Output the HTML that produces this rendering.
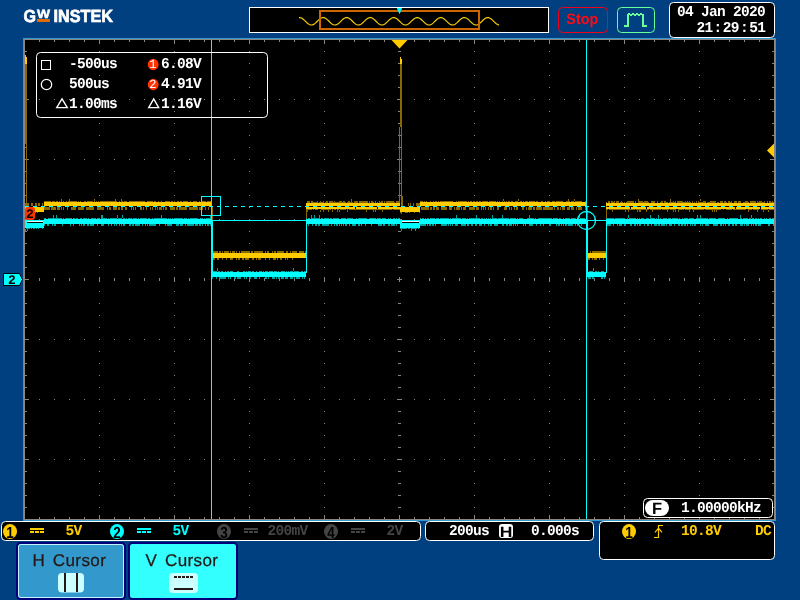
<!DOCTYPE html>
<html lang="en">
<head>
<meta charset="utf-8">
<title>GW Instek oscilloscope - cursor measurement</title>
<style>
html,body{margin:0;padding:0;background:#004080;}
body{width:800px;height:600px;overflow:hidden;position:relative;}
svg{position:absolute;left:0;top:0;display:block;will-change:transform;}
text{white-space:pre;}
</style>
</head>
<body>
<svg width="800" height="600" viewBox="0 0 800 600" shape-rendering="crispEdges" text-rendering="geometricPrecision">
<rect x="0" y="0" width="800" height="600" fill="#004080"/>
<rect x="23" y="38" width="753" height="483" fill="#3399cc" />
<rect x="24" y="39" width="751" height="481" fill="#8c8580" />
<rect x="25" y="40" width="749" height="479" fill="#000" />
<path d="M99 51h1v1h-1zM99 63h1v1h-1zM99 75h1v1h-1zM99 87h1v1h-1zM99 99h1v1h-1zM99 111h1v1h-1zM99 123h1v1h-1zM99 135h1v1h-1zM99 147h1v1h-1zM99 159h1v1h-1zM99 171h1v1h-1zM99 183h1v1h-1zM99 195h1v1h-1zM99 207h1v1h-1zM99 219h1v1h-1zM99 231h1v1h-1zM99 243h1v1h-1zM99 255h1v1h-1zM99 267h1v1h-1zM99 279h1v1h-1zM99 291h1v1h-1zM99 303h1v1h-1zM99 315h1v1h-1zM99 327h1v1h-1zM99 339h1v1h-1zM99 351h1v1h-1zM99 363h1v1h-1zM99 375h1v1h-1zM99 387h1v1h-1zM99 399h1v1h-1zM99 411h1v1h-1zM99 423h1v1h-1zM99 435h1v1h-1zM99 447h1v1h-1zM99 459h1v1h-1zM99 471h1v1h-1zM99 483h1v1h-1zM99 495h1v1h-1zM99 507h1v1h-1zM174 51h1v1h-1zM174 63h1v1h-1zM174 75h1v1h-1zM174 87h1v1h-1zM174 99h1v1h-1zM174 111h1v1h-1zM174 123h1v1h-1zM174 135h1v1h-1zM174 147h1v1h-1zM174 159h1v1h-1zM174 171h1v1h-1zM174 183h1v1h-1zM174 195h1v1h-1zM174 207h1v1h-1zM174 219h1v1h-1zM174 231h1v1h-1zM174 243h1v1h-1zM174 255h1v1h-1zM174 267h1v1h-1zM174 279h1v1h-1zM174 291h1v1h-1zM174 303h1v1h-1zM174 315h1v1h-1zM174 327h1v1h-1zM174 339h1v1h-1zM174 351h1v1h-1zM174 363h1v1h-1zM174 375h1v1h-1zM174 387h1v1h-1zM174 399h1v1h-1zM174 411h1v1h-1zM174 423h1v1h-1zM174 435h1v1h-1zM174 447h1v1h-1zM174 459h1v1h-1zM174 471h1v1h-1zM174 483h1v1h-1zM174 495h1v1h-1zM174 507h1v1h-1zM249 51h1v1h-1zM249 63h1v1h-1zM249 75h1v1h-1zM249 87h1v1h-1zM249 99h1v1h-1zM249 111h1v1h-1zM249 123h1v1h-1zM249 135h1v1h-1zM249 147h1v1h-1zM249 159h1v1h-1zM249 171h1v1h-1zM249 183h1v1h-1zM249 195h1v1h-1zM249 207h1v1h-1zM249 219h1v1h-1zM249 231h1v1h-1zM249 243h1v1h-1zM249 255h1v1h-1zM249 267h1v1h-1zM249 279h1v1h-1zM249 291h1v1h-1zM249 303h1v1h-1zM249 315h1v1h-1zM249 327h1v1h-1zM249 339h1v1h-1zM249 351h1v1h-1zM249 363h1v1h-1zM249 375h1v1h-1zM249 387h1v1h-1zM249 399h1v1h-1zM249 411h1v1h-1zM249 423h1v1h-1zM249 435h1v1h-1zM249 447h1v1h-1zM249 459h1v1h-1zM249 471h1v1h-1zM249 483h1v1h-1zM249 495h1v1h-1zM249 507h1v1h-1zM324 51h1v1h-1zM324 63h1v1h-1zM324 75h1v1h-1zM324 87h1v1h-1zM324 99h1v1h-1zM324 111h1v1h-1zM324 123h1v1h-1zM324 135h1v1h-1zM324 147h1v1h-1zM324 159h1v1h-1zM324 171h1v1h-1zM324 183h1v1h-1zM324 195h1v1h-1zM324 207h1v1h-1zM324 219h1v1h-1zM324 231h1v1h-1zM324 243h1v1h-1zM324 255h1v1h-1zM324 267h1v1h-1zM324 279h1v1h-1zM324 291h1v1h-1zM324 303h1v1h-1zM324 315h1v1h-1zM324 327h1v1h-1zM324 339h1v1h-1zM324 351h1v1h-1zM324 363h1v1h-1zM324 375h1v1h-1zM324 387h1v1h-1zM324 399h1v1h-1zM324 411h1v1h-1zM324 423h1v1h-1zM324 435h1v1h-1zM324 447h1v1h-1zM324 459h1v1h-1zM324 471h1v1h-1zM324 483h1v1h-1zM324 495h1v1h-1zM324 507h1v1h-1zM474 51h1v1h-1zM474 63h1v1h-1zM474 75h1v1h-1zM474 87h1v1h-1zM474 99h1v1h-1zM474 111h1v1h-1zM474 123h1v1h-1zM474 135h1v1h-1zM474 147h1v1h-1zM474 159h1v1h-1zM474 171h1v1h-1zM474 183h1v1h-1zM474 195h1v1h-1zM474 207h1v1h-1zM474 219h1v1h-1zM474 231h1v1h-1zM474 243h1v1h-1zM474 255h1v1h-1zM474 267h1v1h-1zM474 279h1v1h-1zM474 291h1v1h-1zM474 303h1v1h-1zM474 315h1v1h-1zM474 327h1v1h-1zM474 339h1v1h-1zM474 351h1v1h-1zM474 363h1v1h-1zM474 375h1v1h-1zM474 387h1v1h-1zM474 399h1v1h-1zM474 411h1v1h-1zM474 423h1v1h-1zM474 435h1v1h-1zM474 447h1v1h-1zM474 459h1v1h-1zM474 471h1v1h-1zM474 483h1v1h-1zM474 495h1v1h-1zM474 507h1v1h-1zM549 51h1v1h-1zM549 63h1v1h-1zM549 75h1v1h-1zM549 87h1v1h-1zM549 99h1v1h-1zM549 111h1v1h-1zM549 123h1v1h-1zM549 135h1v1h-1zM549 147h1v1h-1zM549 159h1v1h-1zM549 171h1v1h-1zM549 183h1v1h-1zM549 195h1v1h-1zM549 207h1v1h-1zM549 219h1v1h-1zM549 231h1v1h-1zM549 243h1v1h-1zM549 255h1v1h-1zM549 267h1v1h-1zM549 279h1v1h-1zM549 291h1v1h-1zM549 303h1v1h-1zM549 315h1v1h-1zM549 327h1v1h-1zM549 339h1v1h-1zM549 351h1v1h-1zM549 363h1v1h-1zM549 375h1v1h-1zM549 387h1v1h-1zM549 399h1v1h-1zM549 411h1v1h-1zM549 423h1v1h-1zM549 435h1v1h-1zM549 447h1v1h-1zM549 459h1v1h-1zM549 471h1v1h-1zM549 483h1v1h-1zM549 495h1v1h-1zM549 507h1v1h-1zM624 51h1v1h-1zM624 63h1v1h-1zM624 75h1v1h-1zM624 87h1v1h-1zM624 99h1v1h-1zM624 111h1v1h-1zM624 123h1v1h-1zM624 135h1v1h-1zM624 147h1v1h-1zM624 159h1v1h-1zM624 171h1v1h-1zM624 183h1v1h-1zM624 195h1v1h-1zM624 207h1v1h-1zM624 219h1v1h-1zM624 231h1v1h-1zM624 243h1v1h-1zM624 255h1v1h-1zM624 267h1v1h-1zM624 279h1v1h-1zM624 291h1v1h-1zM624 303h1v1h-1zM624 315h1v1h-1zM624 327h1v1h-1zM624 339h1v1h-1zM624 351h1v1h-1zM624 363h1v1h-1zM624 375h1v1h-1zM624 387h1v1h-1zM624 399h1v1h-1zM624 411h1v1h-1zM624 423h1v1h-1zM624 435h1v1h-1zM624 447h1v1h-1zM624 459h1v1h-1zM624 471h1v1h-1zM624 483h1v1h-1zM624 495h1v1h-1zM624 507h1v1h-1zM699 51h1v1h-1zM699 63h1v1h-1zM699 75h1v1h-1zM699 87h1v1h-1zM699 99h1v1h-1zM699 111h1v1h-1zM699 123h1v1h-1zM699 135h1v1h-1zM699 147h1v1h-1zM699 159h1v1h-1zM699 171h1v1h-1zM699 183h1v1h-1zM699 195h1v1h-1zM699 207h1v1h-1zM699 219h1v1h-1zM699 231h1v1h-1zM699 243h1v1h-1zM699 255h1v1h-1zM699 267h1v1h-1zM699 279h1v1h-1zM699 291h1v1h-1zM699 303h1v1h-1zM699 315h1v1h-1zM699 327h1v1h-1zM699 339h1v1h-1zM699 351h1v1h-1zM699 363h1v1h-1zM699 375h1v1h-1zM699 387h1v1h-1zM699 399h1v1h-1zM699 411h1v1h-1zM699 423h1v1h-1zM699 435h1v1h-1zM699 447h1v1h-1zM699 459h1v1h-1zM699 471h1v1h-1zM699 483h1v1h-1zM699 495h1v1h-1zM699 507h1v1h-1zM39 99h1v1h-1zM54 99h1v1h-1zM69 99h1v1h-1zM84 99h1v1h-1zM99 99h1v1h-1zM114 99h1v1h-1zM129 99h1v1h-1zM144 99h1v1h-1zM159 99h1v1h-1zM174 99h1v1h-1zM189 99h1v1h-1zM204 99h1v1h-1zM219 99h1v1h-1zM234 99h1v1h-1zM249 99h1v1h-1zM264 99h1v1h-1zM279 99h1v1h-1zM294 99h1v1h-1zM309 99h1v1h-1zM324 99h1v1h-1zM339 99h1v1h-1zM354 99h1v1h-1zM369 99h1v1h-1zM384 99h1v1h-1zM399 99h1v1h-1zM414 99h1v1h-1zM429 99h1v1h-1zM444 99h1v1h-1zM459 99h1v1h-1zM474 99h1v1h-1zM489 99h1v1h-1zM504 99h1v1h-1zM519 99h1v1h-1zM534 99h1v1h-1zM549 99h1v1h-1zM564 99h1v1h-1zM579 99h1v1h-1zM594 99h1v1h-1zM609 99h1v1h-1zM624 99h1v1h-1zM639 99h1v1h-1zM654 99h1v1h-1zM669 99h1v1h-1zM684 99h1v1h-1zM699 99h1v1h-1zM714 99h1v1h-1zM729 99h1v1h-1zM744 99h1v1h-1zM759 99h1v1h-1zM39 159h1v1h-1zM54 159h1v1h-1zM69 159h1v1h-1zM84 159h1v1h-1zM99 159h1v1h-1zM114 159h1v1h-1zM129 159h1v1h-1zM144 159h1v1h-1zM159 159h1v1h-1zM174 159h1v1h-1zM189 159h1v1h-1zM204 159h1v1h-1zM219 159h1v1h-1zM234 159h1v1h-1zM249 159h1v1h-1zM264 159h1v1h-1zM279 159h1v1h-1zM294 159h1v1h-1zM309 159h1v1h-1zM324 159h1v1h-1zM339 159h1v1h-1zM354 159h1v1h-1zM369 159h1v1h-1zM384 159h1v1h-1zM399 159h1v1h-1zM414 159h1v1h-1zM429 159h1v1h-1zM444 159h1v1h-1zM459 159h1v1h-1zM474 159h1v1h-1zM489 159h1v1h-1zM504 159h1v1h-1zM519 159h1v1h-1zM534 159h1v1h-1zM549 159h1v1h-1zM564 159h1v1h-1zM579 159h1v1h-1zM594 159h1v1h-1zM609 159h1v1h-1zM624 159h1v1h-1zM639 159h1v1h-1zM654 159h1v1h-1zM669 159h1v1h-1zM684 159h1v1h-1zM699 159h1v1h-1zM714 159h1v1h-1zM729 159h1v1h-1zM744 159h1v1h-1zM759 159h1v1h-1zM39 219h1v1h-1zM54 219h1v1h-1zM69 219h1v1h-1zM84 219h1v1h-1zM99 219h1v1h-1zM114 219h1v1h-1zM129 219h1v1h-1zM144 219h1v1h-1zM159 219h1v1h-1zM174 219h1v1h-1zM189 219h1v1h-1zM204 219h1v1h-1zM219 219h1v1h-1zM234 219h1v1h-1zM249 219h1v1h-1zM264 219h1v1h-1zM279 219h1v1h-1zM294 219h1v1h-1zM309 219h1v1h-1zM324 219h1v1h-1zM339 219h1v1h-1zM354 219h1v1h-1zM369 219h1v1h-1zM384 219h1v1h-1zM399 219h1v1h-1zM414 219h1v1h-1zM429 219h1v1h-1zM444 219h1v1h-1zM459 219h1v1h-1zM474 219h1v1h-1zM489 219h1v1h-1zM504 219h1v1h-1zM519 219h1v1h-1zM534 219h1v1h-1zM549 219h1v1h-1zM564 219h1v1h-1zM579 219h1v1h-1zM594 219h1v1h-1zM609 219h1v1h-1zM624 219h1v1h-1zM639 219h1v1h-1zM654 219h1v1h-1zM669 219h1v1h-1zM684 219h1v1h-1zM699 219h1v1h-1zM714 219h1v1h-1zM729 219h1v1h-1zM744 219h1v1h-1zM759 219h1v1h-1zM39 339h1v1h-1zM54 339h1v1h-1zM69 339h1v1h-1zM84 339h1v1h-1zM99 339h1v1h-1zM114 339h1v1h-1zM129 339h1v1h-1zM144 339h1v1h-1zM159 339h1v1h-1zM174 339h1v1h-1zM189 339h1v1h-1zM204 339h1v1h-1zM219 339h1v1h-1zM234 339h1v1h-1zM249 339h1v1h-1zM264 339h1v1h-1zM279 339h1v1h-1zM294 339h1v1h-1zM309 339h1v1h-1zM324 339h1v1h-1zM339 339h1v1h-1zM354 339h1v1h-1zM369 339h1v1h-1zM384 339h1v1h-1zM399 339h1v1h-1zM414 339h1v1h-1zM429 339h1v1h-1zM444 339h1v1h-1zM459 339h1v1h-1zM474 339h1v1h-1zM489 339h1v1h-1zM504 339h1v1h-1zM519 339h1v1h-1zM534 339h1v1h-1zM549 339h1v1h-1zM564 339h1v1h-1zM579 339h1v1h-1zM594 339h1v1h-1zM609 339h1v1h-1zM624 339h1v1h-1zM639 339h1v1h-1zM654 339h1v1h-1zM669 339h1v1h-1zM684 339h1v1h-1zM699 339h1v1h-1zM714 339h1v1h-1zM729 339h1v1h-1zM744 339h1v1h-1zM759 339h1v1h-1zM39 399h1v1h-1zM54 399h1v1h-1zM69 399h1v1h-1zM84 399h1v1h-1zM99 399h1v1h-1zM114 399h1v1h-1zM129 399h1v1h-1zM144 399h1v1h-1zM159 399h1v1h-1zM174 399h1v1h-1zM189 399h1v1h-1zM204 399h1v1h-1zM219 399h1v1h-1zM234 399h1v1h-1zM249 399h1v1h-1zM264 399h1v1h-1zM279 399h1v1h-1zM294 399h1v1h-1zM309 399h1v1h-1zM324 399h1v1h-1zM339 399h1v1h-1zM354 399h1v1h-1zM369 399h1v1h-1zM384 399h1v1h-1zM399 399h1v1h-1zM414 399h1v1h-1zM429 399h1v1h-1zM444 399h1v1h-1zM459 399h1v1h-1zM474 399h1v1h-1zM489 399h1v1h-1zM504 399h1v1h-1zM519 399h1v1h-1zM534 399h1v1h-1zM549 399h1v1h-1zM564 399h1v1h-1zM579 399h1v1h-1zM594 399h1v1h-1zM609 399h1v1h-1zM624 399h1v1h-1zM639 399h1v1h-1zM654 399h1v1h-1zM669 399h1v1h-1zM684 399h1v1h-1zM699 399h1v1h-1zM714 399h1v1h-1zM729 399h1v1h-1zM744 399h1v1h-1zM759 399h1v1h-1zM39 459h1v1h-1zM54 459h1v1h-1zM69 459h1v1h-1zM84 459h1v1h-1zM99 459h1v1h-1zM114 459h1v1h-1zM129 459h1v1h-1zM144 459h1v1h-1zM159 459h1v1h-1zM174 459h1v1h-1zM189 459h1v1h-1zM204 459h1v1h-1zM219 459h1v1h-1zM234 459h1v1h-1zM249 459h1v1h-1zM264 459h1v1h-1zM279 459h1v1h-1zM294 459h1v1h-1zM309 459h1v1h-1zM324 459h1v1h-1zM339 459h1v1h-1zM354 459h1v1h-1zM369 459h1v1h-1zM384 459h1v1h-1zM399 459h1v1h-1zM414 459h1v1h-1zM429 459h1v1h-1zM444 459h1v1h-1zM459 459h1v1h-1zM474 459h1v1h-1zM489 459h1v1h-1zM504 459h1v1h-1zM519 459h1v1h-1zM534 459h1v1h-1zM549 459h1v1h-1zM564 459h1v1h-1zM579 459h1v1h-1zM594 459h1v1h-1zM609 459h1v1h-1zM624 459h1v1h-1zM639 459h1v1h-1zM654 459h1v1h-1zM669 459h1v1h-1zM684 459h1v1h-1zM699 459h1v1h-1zM714 459h1v1h-1zM729 459h1v1h-1zM744 459h1v1h-1zM759 459h1v1h-1z" fill="#848684"/>
<path d="M398 51h3v1h-3zM398 63h3v1h-3zM398 75h3v1h-3zM398 87h3v1h-3zM397 99h5v1h-5zM398 111h3v1h-3zM398 123h3v1h-3zM398 135h3v1h-3zM398 147h3v1h-3zM397 159h5v1h-5zM398 171h3v1h-3zM398 183h3v1h-3zM398 195h3v1h-3zM398 207h3v1h-3zM397 219h5v1h-5zM398 231h3v1h-3zM398 243h3v1h-3zM398 255h3v1h-3zM398 267h3v1h-3zM397 279h5v1h-5zM398 291h3v1h-3zM398 303h3v1h-3zM398 315h3v1h-3zM398 327h3v1h-3zM397 339h5v1h-5zM398 351h3v1h-3zM398 363h3v1h-3zM398 375h3v1h-3zM398 387h3v1h-3zM397 399h5v1h-5zM398 411h3v1h-3zM398 423h3v1h-3zM398 435h3v1h-3zM398 447h3v1h-3zM397 459h5v1h-5zM398 471h3v1h-3zM398 483h3v1h-3zM398 495h3v1h-3zM398 507h3v1h-3zM39 278h1v3h-1zM54 278h1v3h-1zM69 278h1v3h-1zM84 278h1v3h-1zM99 277h1v5h-1zM114 278h1v3h-1zM129 278h1v3h-1zM144 278h1v3h-1zM159 278h1v3h-1zM174 277h1v5h-1zM189 278h1v3h-1zM204 278h1v3h-1zM219 278h1v3h-1zM234 278h1v3h-1zM249 277h1v5h-1zM264 278h1v3h-1zM279 278h1v3h-1zM294 278h1v3h-1zM309 278h1v3h-1zM324 277h1v5h-1zM339 278h1v3h-1zM354 278h1v3h-1zM369 278h1v3h-1zM384 278h1v3h-1zM399 277h1v5h-1zM414 278h1v3h-1zM429 278h1v3h-1zM444 278h1v3h-1zM459 278h1v3h-1zM474 277h1v5h-1zM489 278h1v3h-1zM504 278h1v3h-1zM519 278h1v3h-1zM534 278h1v3h-1zM549 277h1v5h-1zM564 278h1v3h-1zM579 278h1v3h-1zM594 278h1v3h-1zM609 278h1v3h-1zM624 277h1v5h-1zM639 278h1v3h-1zM654 278h1v3h-1zM669 278h1v3h-1zM684 278h1v3h-1zM699 277h1v5h-1zM714 278h1v3h-1zM729 278h1v3h-1zM744 278h1v3h-1zM759 278h1v3h-1zM39 40h1v2h-1zM39 517h1v2h-1zM54 40h1v2h-1zM54 517h1v2h-1zM69 40h1v2h-1zM69 517h1v2h-1zM84 40h1v2h-1zM84 517h1v2h-1zM99 40h1v4h-1zM99 515h1v4h-1zM114 40h1v2h-1zM114 517h1v2h-1zM129 40h1v2h-1zM129 517h1v2h-1zM144 40h1v2h-1zM144 517h1v2h-1zM159 40h1v2h-1zM159 517h1v2h-1zM174 40h1v4h-1zM174 515h1v4h-1zM189 40h1v2h-1zM189 517h1v2h-1zM204 40h1v2h-1zM204 517h1v2h-1zM219 40h1v2h-1zM219 517h1v2h-1zM234 40h1v2h-1zM234 517h1v2h-1zM249 40h1v4h-1zM249 515h1v4h-1zM264 40h1v2h-1zM264 517h1v2h-1zM279 40h1v2h-1zM279 517h1v2h-1zM294 40h1v2h-1zM294 517h1v2h-1zM309 40h1v2h-1zM309 517h1v2h-1zM324 40h1v4h-1zM324 515h1v4h-1zM339 40h1v2h-1zM339 517h1v2h-1zM354 40h1v2h-1zM354 517h1v2h-1zM369 40h1v2h-1zM369 517h1v2h-1zM384 40h1v2h-1zM384 517h1v2h-1zM399 40h1v4h-1zM399 515h1v4h-1zM414 40h1v2h-1zM414 517h1v2h-1zM429 40h1v2h-1zM429 517h1v2h-1zM444 40h1v2h-1zM444 517h1v2h-1zM459 40h1v2h-1zM459 517h1v2h-1zM474 40h1v4h-1zM474 515h1v4h-1zM489 40h1v2h-1zM489 517h1v2h-1zM504 40h1v2h-1zM504 517h1v2h-1zM519 40h1v2h-1zM519 517h1v2h-1zM534 40h1v2h-1zM534 517h1v2h-1zM549 40h1v4h-1zM549 515h1v4h-1zM564 40h1v2h-1zM564 517h1v2h-1zM579 40h1v2h-1zM579 517h1v2h-1zM594 40h1v2h-1zM594 517h1v2h-1zM609 40h1v2h-1zM609 517h1v2h-1zM624 40h1v4h-1zM624 515h1v4h-1zM639 40h1v2h-1zM639 517h1v2h-1zM654 40h1v2h-1zM654 517h1v2h-1zM669 40h1v2h-1zM669 517h1v2h-1zM684 40h1v2h-1zM684 517h1v2h-1zM699 40h1v4h-1zM699 515h1v4h-1zM714 40h1v2h-1zM714 517h1v2h-1zM729 40h1v2h-1zM729 517h1v2h-1zM744 40h1v2h-1zM744 517h1v2h-1zM759 40h1v2h-1zM759 517h1v2h-1zM25 51h2v1h-2zM772 51h2v1h-2zM25 63h2v1h-2zM772 63h2v1h-2zM25 75h2v1h-2zM772 75h2v1h-2zM25 87h2v1h-2zM772 87h2v1h-2zM25 99h4v1h-4zM770 99h4v1h-4zM25 111h2v1h-2zM772 111h2v1h-2zM25 123h2v1h-2zM772 123h2v1h-2zM25 135h2v1h-2zM772 135h2v1h-2zM25 147h2v1h-2zM772 147h2v1h-2zM25 159h4v1h-4zM770 159h4v1h-4zM25 171h2v1h-2zM772 171h2v1h-2zM25 183h2v1h-2zM772 183h2v1h-2zM25 195h2v1h-2zM772 195h2v1h-2zM25 207h2v1h-2zM772 207h2v1h-2zM25 219h4v1h-4zM770 219h4v1h-4zM25 231h2v1h-2zM772 231h2v1h-2zM25 243h2v1h-2zM772 243h2v1h-2zM25 255h2v1h-2zM772 255h2v1h-2zM25 267h2v1h-2zM772 267h2v1h-2zM25 279h4v1h-4zM770 279h4v1h-4zM25 291h2v1h-2zM772 291h2v1h-2zM25 303h2v1h-2zM772 303h2v1h-2zM25 315h2v1h-2zM772 315h2v1h-2zM25 327h2v1h-2zM772 327h2v1h-2zM25 339h4v1h-4zM770 339h4v1h-4zM25 351h2v1h-2zM772 351h2v1h-2zM25 363h2v1h-2zM772 363h2v1h-2zM25 375h2v1h-2zM772 375h2v1h-2zM25 387h2v1h-2zM772 387h2v1h-2zM25 399h4v1h-4zM770 399h4v1h-4zM25 411h2v1h-2zM772 411h2v1h-2zM25 423h2v1h-2zM772 423h2v1h-2zM25 435h2v1h-2zM772 435h2v1h-2zM25 447h2v1h-2zM772 447h2v1h-2zM25 459h4v1h-4zM770 459h4v1h-4zM25 471h2v1h-2zM772 471h2v1h-2zM25 483h2v1h-2zM772 483h2v1h-2zM25 495h2v1h-2zM772 495h2v1h-2zM25 507h2v1h-2zM772 507h2v1h-2z" fill="#868686"/>
<path d="M25 203h1v3h-1zM25 212h1v1h-1zM27 203h1v3h-1zM28 203h1v3h-1zM30 212h1v1h-1zM31 203h1v3h-1zM31 212h1v1h-1zM32 203h1v3h-1zM33 212h1v1h-1zM35 203h1v3h-1zM35 212h1v1h-1zM36 203h1v3h-1zM37 212h1v1h-1zM38 203h1v3h-1zM39 203h1v3h-1zM42 203h1v3h-1zM44 201h1v1h-1zM44 207h1v3h-1zM45 201h1v1h-1zM45 207h1v3h-1zM46 201h1v1h-1zM46 207h1v3h-1zM47 201h1v1h-1zM47 207h1v3h-1zM48 201h1v1h-1zM48 207h1v3h-1zM49 201h1v1h-1zM49 207h1v3h-1zM50 201h1v1h-1zM51 207h1v3h-1zM52 201h1v1h-1zM52 207h1v3h-1zM53 201h1v1h-1zM53 207h1v3h-1zM54 201h1v1h-1zM54 207h1v3h-1zM55 207h1v3h-1zM56 201h1v1h-1zM57 201h1v1h-1zM57 207h1v3h-1zM58 207h1v3h-1zM59 201h1v1h-1zM59 207h1v3h-1zM61 201h1v1h-1zM61 199h1v2h-1zM61 207h1v3h-1zM63 201h1v1h-1zM63 207h1v3h-1zM66 201h1v1h-1zM67 207h1v3h-1zM68 201h1v1h-1zM69 201h1v1h-1zM69 199h1v2h-1zM70 201h1v1h-1zM71 201h1v1h-1zM71 207h1v3h-1zM72 201h1v1h-1zM72 207h1v3h-1zM73 201h1v1h-1zM73 207h1v3h-1zM74 201h1v1h-1zM74 207h1v3h-1zM75 201h1v1h-1zM75 207h1v3h-1zM76 201h1v1h-1zM78 201h1v1h-1zM78 207h1v3h-1zM79 207h1v3h-1zM80 201h1v1h-1zM80 207h1v3h-1zM81 207h1v3h-1zM82 207h1v3h-1zM83 207h1v3h-1zM84 201h1v1h-1zM85 201h1v1h-1zM86 207h1v3h-1zM87 201h1v1h-1zM87 207h1v3h-1zM88 201h1v1h-1zM88 207h1v3h-1zM89 201h1v1h-1zM89 207h1v3h-1zM90 201h1v1h-1zM90 207h1v3h-1zM91 201h1v1h-1zM91 207h1v3h-1zM92 201h1v1h-1zM92 207h1v3h-1zM93 207h1v3h-1zM94 201h1v1h-1zM94 199h1v2h-1zM96 201h1v1h-1zM97 207h1v3h-1zM98 201h1v1h-1zM98 207h1v3h-1zM99 207h1v3h-1zM100 201h1v1h-1zM100 207h1v3h-1zM101 201h1v1h-1zM101 207h1v3h-1zM102 201h1v1h-1zM102 207h1v3h-1zM103 201h1v1h-1zM103 207h1v3h-1zM104 201h1v1h-1zM105 201h1v1h-1zM106 201h1v1h-1zM107 201h1v1h-1zM107 207h1v3h-1zM108 201h1v1h-1zM109 201h1v1h-1zM109 207h1v3h-1zM110 201h1v1h-1zM110 207h1v3h-1zM111 201h1v1h-1zM112 201h1v1h-1zM113 201h1v1h-1zM113 207h1v3h-1zM114 201h1v1h-1zM114 207h1v3h-1zM115 201h1v1h-1zM115 199h1v2h-1zM115 207h1v3h-1zM116 201h1v1h-1zM116 207h1v3h-1zM118 207h1v3h-1zM119 201h1v1h-1zM119 207h1v3h-1zM121 201h1v1h-1zM121 199h1v2h-1zM121 207h1v3h-1zM122 201h1v1h-1zM122 207h1v3h-1zM124 201h1v1h-1zM125 201h1v1h-1zM125 207h1v3h-1zM126 201h1v1h-1zM126 207h1v3h-1zM129 201h1v1h-1zM130 201h1v1h-1zM131 201h1v1h-1zM131 207h1v3h-1zM132 201h1v1h-1zM133 201h1v1h-1zM133 207h1v3h-1zM134 201h1v1h-1zM135 201h1v1h-1zM135 207h1v3h-1zM136 201h1v1h-1zM137 201h1v1h-1zM138 201h1v1h-1zM139 201h1v1h-1zM140 201h1v1h-1zM140 207h1v3h-1zM141 201h1v1h-1zM141 207h1v3h-1zM142 201h1v1h-1zM143 201h1v1h-1zM143 207h1v3h-1zM144 201h1v1h-1zM146 207h1v3h-1zM147 201h1v1h-1zM148 201h1v1h-1zM149 201h1v1h-1zM150 201h1v1h-1zM150 207h1v3h-1zM151 201h1v1h-1zM152 201h1v1h-1zM152 207h1v3h-1zM154 201h1v1h-1zM155 201h1v1h-1zM155 207h1v3h-1zM157 207h1v3h-1zM158 201h1v1h-1zM159 207h1v3h-1zM160 207h1v3h-1zM161 201h1v1h-1zM161 207h1v3h-1zM163 207h1v3h-1zM165 201h1v1h-1zM165 207h1v3h-1zM166 201h1v1h-1zM166 207h1v3h-1zM167 201h1v1h-1zM168 201h1v1h-1zM169 201h1v1h-1zM170 207h1v3h-1zM171 201h1v1h-1zM171 207h1v3h-1zM172 201h1v1h-1zM172 207h1v3h-1zM173 207h1v3h-1zM174 201h1v1h-1zM174 207h1v3h-1zM176 207h1v3h-1zM177 201h1v1h-1zM177 207h1v3h-1zM178 201h1v1h-1zM179 207h1v3h-1zM180 201h1v1h-1zM180 207h1v3h-1zM181 201h1v1h-1zM181 207h1v3h-1zM182 207h1v3h-1zM183 201h1v1h-1zM183 207h1v3h-1zM184 201h1v1h-1zM184 207h1v3h-1zM185 201h1v1h-1zM185 207h1v3h-1zM186 201h1v1h-1zM186 207h1v3h-1zM187 201h1v1h-1zM189 207h1v3h-1zM190 201h1v1h-1zM190 207h1v3h-1zM191 207h1v3h-1zM192 207h1v3h-1zM193 201h1v1h-1zM193 207h1v3h-1zM194 201h1v1h-1zM194 207h1v3h-1zM195 201h1v1h-1zM195 207h1v3h-1zM196 201h1v1h-1zM196 207h1v3h-1zM197 207h1v3h-1zM199 201h1v1h-1zM199 207h1v3h-1zM200 207h1v3h-1zM202 201h1v1h-1zM202 207h1v3h-1zM203 201h1v1h-1zM204 201h1v1h-1zM205 201h1v1h-1zM205 207h1v3h-1zM207 201h1v1h-1zM208 201h1v1h-1zM208 207h1v3h-1zM209 201h1v1h-1zM210 201h1v1h-1zM211 201h1v1h-1zM211 207h1v3h-1zM212 251h1v2h-1zM213 251h1v2h-1zM213 258h1v2h-1zM214 251h1v2h-1zM214 258h1v2h-1zM215 251h1v2h-1zM216 251h1v2h-1zM217 251h1v2h-1zM217 258h1v2h-1zM218 258h1v2h-1zM219 251h1v2h-1zM220 251h1v2h-1zM222 251h1v2h-1zM222 258h1v2h-1zM224 251h1v2h-1zM225 251h1v2h-1zM226 251h1v2h-1zM226 258h1v2h-1zM227 251h1v2h-1zM228 251h1v2h-1zM230 251h1v2h-1zM230 258h1v2h-1zM231 258h1v2h-1zM232 251h1v2h-1zM232 258h1v2h-1zM233 251h1v2h-1zM234 251h1v2h-1zM236 251h1v2h-1zM236 258h1v2h-1zM238 258h1v2h-1zM239 251h1v2h-1zM239 258h1v2h-1zM241 251h1v2h-1zM242 251h1v2h-1zM242 258h1v2h-1zM243 251h1v2h-1zM243 258h1v2h-1zM244 251h1v2h-1zM245 251h1v2h-1zM245 258h1v2h-1zM246 251h1v2h-1zM246 258h1v2h-1zM247 251h1v2h-1zM247 258h1v2h-1zM248 251h1v2h-1zM248 258h1v2h-1zM249 251h1v2h-1zM251 251h1v2h-1zM252 251h1v2h-1zM252 258h1v2h-1zM253 258h1v2h-1zM254 251h1v2h-1zM255 251h1v2h-1zM256 251h1v2h-1zM256 258h1v2h-1zM257 251h1v2h-1zM258 251h1v2h-1zM258 258h1v2h-1zM259 251h1v2h-1zM259 258h1v2h-1zM260 251h1v2h-1zM260 258h1v2h-1zM261 251h1v2h-1zM262 251h1v2h-1zM265 251h1v2h-1zM265 258h1v2h-1zM267 251h1v2h-1zM268 251h1v2h-1zM269 258h1v2h-1zM272 251h1v2h-1zM273 258h1v2h-1zM274 251h1v2h-1zM274 258h1v2h-1zM275 251h1v2h-1zM275 258h1v2h-1zM277 251h1v2h-1zM277 258h1v2h-1zM278 251h1v2h-1zM279 251h1v2h-1zM280 251h1v2h-1zM280 258h1v2h-1zM281 251h1v2h-1zM281 258h1v2h-1zM282 251h1v2h-1zM283 251h1v2h-1zM285 258h1v2h-1zM286 251h1v2h-1zM287 251h1v2h-1zM287 258h1v2h-1zM290 251h1v2h-1zM292 251h1v2h-1zM292 258h1v2h-1zM293 251h1v2h-1zM294 251h1v2h-1zM295 251h1v2h-1zM296 251h1v2h-1zM299 251h1v2h-1zM300 251h1v2h-1zM301 251h1v2h-1zM302 251h1v2h-1zM303 251h1v2h-1zM305 251h1v2h-1zM306 209h1v1h-1zM307 201h1v2h-1zM307 209h1v1h-1zM307 210h1v2h-1zM308 201h1v2h-1zM308 209h1v1h-1zM309 201h1v2h-1zM309 209h1v1h-1zM310 209h1v1h-1zM311 201h1v2h-1zM311 209h1v1h-1zM312 201h1v2h-1zM313 202h1v1h-1zM313 209h1v1h-1zM314 202h1v1h-1zM315 202h1v1h-1zM315 209h1v1h-1zM316 202h1v1h-1zM316 209h1v1h-1zM317 201h1v2h-1zM317 209h1v1h-1zM319 202h1v1h-1zM320 201h1v2h-1zM320 210h1v2h-1zM321 202h1v1h-1zM321 209h1v1h-1zM322 202h1v1h-1zM322 209h1v1h-1zM323 201h1v2h-1zM323 209h1v1h-1zM323 210h1v2h-1zM324 209h1v1h-1zM325 202h1v1h-1zM325 209h1v1h-1zM326 201h1v2h-1zM326 209h1v1h-1zM327 201h1v2h-1zM327 209h1v1h-1zM328 209h1v1h-1zM328 210h1v2h-1zM329 201h1v2h-1zM329 209h1v1h-1zM330 201h1v2h-1zM330 209h1v1h-1zM331 201h1v2h-1zM332 201h1v2h-1zM332 209h1v1h-1zM332 210h1v2h-1zM333 202h1v1h-1zM334 201h1v2h-1zM334 209h1v1h-1zM335 202h1v1h-1zM335 209h1v1h-1zM336 202h1v1h-1zM337 202h1v1h-1zM337 209h1v1h-1zM337 210h1v2h-1zM338 202h1v1h-1zM338 209h1v1h-1zM339 201h1v2h-1zM339 210h1v2h-1zM340 201h1v2h-1zM340 209h1v1h-1zM341 201h1v2h-1zM341 209h1v1h-1zM342 202h1v1h-1zM342 209h1v1h-1zM343 201h1v2h-1zM343 209h1v1h-1zM344 201h1v2h-1zM344 209h1v1h-1zM345 202h1v1h-1zM345 209h1v1h-1zM347 202h1v1h-1zM347 209h1v1h-1zM347 210h1v2h-1zM348 201h1v2h-1zM349 201h1v2h-1zM349 209h1v1h-1zM350 202h1v1h-1zM350 209h1v1h-1zM351 201h1v2h-1zM351 199h1v2h-1zM351 209h1v1h-1zM352 202h1v1h-1zM352 209h1v1h-1zM353 209h1v1h-1zM354 201h1v2h-1zM354 209h1v1h-1zM355 201h1v2h-1zM355 209h1v1h-1zM356 201h1v2h-1zM356 209h1v1h-1zM357 201h1v2h-1zM357 209h1v1h-1zM358 209h1v1h-1zM359 201h1v2h-1zM359 209h1v1h-1zM360 201h1v2h-1zM360 209h1v1h-1zM361 201h1v2h-1zM361 209h1v1h-1zM362 201h1v2h-1zM362 209h1v1h-1zM363 201h1v2h-1zM363 209h1v1h-1zM364 201h1v2h-1zM364 209h1v1h-1zM365 201h1v2h-1zM365 209h1v1h-1zM366 201h1v2h-1zM366 209h1v1h-1zM366 210h1v2h-1zM367 201h1v2h-1zM367 209h1v1h-1zM368 209h1v1h-1zM369 201h1v2h-1zM369 209h1v1h-1zM370 209h1v1h-1zM371 201h1v2h-1zM371 209h1v1h-1zM372 201h1v2h-1zM372 209h1v1h-1zM373 202h1v1h-1zM373 209h1v1h-1zM373 210h1v2h-1zM374 209h1v1h-1zM375 201h1v2h-1zM375 209h1v1h-1zM375 210h1v2h-1zM376 209h1v1h-1zM377 202h1v1h-1zM377 209h1v1h-1zM378 209h1v1h-1zM379 201h1v2h-1zM379 209h1v1h-1zM380 202h1v1h-1zM380 209h1v1h-1zM381 201h1v2h-1zM381 209h1v1h-1zM382 201h1v2h-1zM382 209h1v1h-1zM382 210h1v2h-1zM383 209h1v1h-1zM384 201h1v2h-1zM384 209h1v1h-1zM385 209h1v1h-1zM386 201h1v2h-1zM386 209h1v1h-1zM387 201h1v2h-1zM387 209h1v1h-1zM388 201h1v2h-1zM388 209h1v1h-1zM389 201h1v2h-1zM389 209h1v1h-1zM390 201h1v2h-1zM390 209h1v1h-1zM391 201h1v2h-1zM391 209h1v1h-1zM392 201h1v2h-1zM393 201h1v2h-1zM393 209h1v1h-1zM394 202h1v1h-1zM394 209h1v1h-1zM395 209h1v1h-1zM396 201h1v2h-1zM396 209h1v1h-1zM397 201h1v2h-1zM397 209h1v1h-1zM398 201h1v2h-1zM398 209h1v1h-1zM399 202h1v1h-1zM399 209h1v1h-1zM400 212h1v1h-1zM401 203h1v3h-1zM402 203h1v3h-1zM405 212h1v1h-1zM406 212h1v1h-1zM407 212h1v1h-1zM408 203h1v3h-1zM409 212h1v1h-1zM410 203h1v3h-1zM413 203h1v3h-1zM414 212h1v1h-1zM416 203h1v3h-1zM417 203h1v3h-1zM418 203h1v3h-1zM419 203h1v3h-1zM419 212h1v1h-1zM420 201h1v1h-1zM421 201h1v1h-1zM421 207h1v3h-1zM422 201h1v1h-1zM422 207h1v3h-1zM423 207h1v3h-1zM424 201h1v1h-1zM424 207h1v3h-1zM425 207h1v3h-1zM426 201h1v1h-1zM426 207h1v3h-1zM427 207h1v3h-1zM428 207h1v3h-1zM430 201h1v1h-1zM430 207h1v3h-1zM431 207h1v3h-1zM433 201h1v1h-1zM433 207h1v3h-1zM434 207h1v3h-1zM435 201h1v1h-1zM436 201h1v1h-1zM436 207h1v3h-1zM437 207h1v3h-1zM438 201h1v1h-1zM438 207h1v3h-1zM440 201h1v1h-1zM441 201h1v1h-1zM441 207h1v3h-1zM442 201h1v1h-1zM442 207h1v3h-1zM443 201h1v1h-1zM443 207h1v3h-1zM444 201h1v1h-1zM444 207h1v3h-1zM445 201h1v1h-1zM445 207h1v3h-1zM446 201h1v1h-1zM446 207h1v3h-1zM447 201h1v1h-1zM448 201h1v1h-1zM449 201h1v1h-1zM449 207h1v3h-1zM450 201h1v1h-1zM450 207h1v3h-1zM451 201h1v1h-1zM451 207h1v3h-1zM452 201h1v1h-1zM454 207h1v3h-1zM456 201h1v1h-1zM456 207h1v3h-1zM457 207h1v3h-1zM458 201h1v1h-1zM458 207h1v3h-1zM459 201h1v1h-1zM459 207h1v3h-1zM460 201h1v1h-1zM461 201h1v1h-1zM461 207h1v3h-1zM462 201h1v1h-1zM463 201h1v1h-1zM463 207h1v3h-1zM464 201h1v1h-1zM464 207h1v3h-1zM465 201h1v1h-1zM465 207h1v3h-1zM466 201h1v1h-1zM468 201h1v1h-1zM469 207h1v3h-1zM470 201h1v1h-1zM470 207h1v3h-1zM471 201h1v1h-1zM471 207h1v3h-1zM472 207h1v3h-1zM473 201h1v1h-1zM473 207h1v3h-1zM474 201h1v1h-1zM474 207h1v3h-1zM476 201h1v1h-1zM476 207h1v3h-1zM477 201h1v1h-1zM477 207h1v3h-1zM478 207h1v3h-1zM479 201h1v1h-1zM480 201h1v1h-1zM481 207h1v3h-1zM482 201h1v1h-1zM483 201h1v1h-1zM483 207h1v3h-1zM484 201h1v1h-1zM485 201h1v1h-1zM485 207h1v3h-1zM486 201h1v1h-1zM487 201h1v1h-1zM488 207h1v3h-1zM489 201h1v1h-1zM490 201h1v1h-1zM490 207h1v3h-1zM491 201h1v1h-1zM491 207h1v3h-1zM492 201h1v1h-1zM493 201h1v1h-1zM493 207h1v3h-1zM494 201h1v1h-1zM495 201h1v1h-1zM497 201h1v1h-1zM497 207h1v3h-1zM498 207h1v3h-1zM499 201h1v1h-1zM502 201h1v1h-1zM503 199h1v2h-1zM504 201h1v1h-1zM504 207h1v3h-1zM505 207h1v3h-1zM506 201h1v1h-1zM506 207h1v3h-1zM508 201h1v1h-1zM509 201h1v1h-1zM509 207h1v3h-1zM511 201h1v1h-1zM511 207h1v3h-1zM512 201h1v1h-1zM514 207h1v3h-1zM515 201h1v1h-1zM516 201h1v1h-1zM516 207h1v3h-1zM517 201h1v1h-1zM517 207h1v3h-1zM518 199h1v2h-1zM520 201h1v1h-1zM521 201h1v1h-1zM522 207h1v3h-1zM523 201h1v1h-1zM523 207h1v3h-1zM525 201h1v1h-1zM526 201h1v1h-1zM526 207h1v3h-1zM527 201h1v1h-1zM528 207h1v3h-1zM529 201h1v1h-1zM529 207h1v3h-1zM530 201h1v1h-1zM530 207h1v3h-1zM531 201h1v1h-1zM531 207h1v3h-1zM532 201h1v1h-1zM533 201h1v1h-1zM533 207h1v3h-1zM534 201h1v1h-1zM534 207h1v3h-1zM536 201h1v1h-1zM536 207h1v3h-1zM537 201h1v1h-1zM537 207h1v3h-1zM538 207h1v3h-1zM539 207h1v3h-1zM540 207h1v3h-1zM541 201h1v1h-1zM541 207h1v3h-1zM542 201h1v1h-1zM543 207h1v3h-1zM544 207h1v3h-1zM545 201h1v1h-1zM545 207h1v3h-1zM546 207h1v3h-1zM547 201h1v1h-1zM547 207h1v3h-1zM548 201h1v1h-1zM548 207h1v3h-1zM549 201h1v1h-1zM549 207h1v3h-1zM550 207h1v3h-1zM551 207h1v3h-1zM552 201h1v1h-1zM552 207h1v3h-1zM553 201h1v1h-1zM554 201h1v1h-1zM554 207h1v3h-1zM556 201h1v1h-1zM557 201h1v1h-1zM557 207h1v3h-1zM558 201h1v1h-1zM558 207h1v3h-1zM559 201h1v1h-1zM560 201h1v1h-1zM560 207h1v3h-1zM561 201h1v1h-1zM562 201h1v1h-1zM562 207h1v3h-1zM563 207h1v3h-1zM564 207h1v3h-1zM566 201h1v1h-1zM567 201h1v1h-1zM567 207h1v3h-1zM568 201h1v1h-1zM568 199h1v2h-1zM568 207h1v3h-1zM569 201h1v1h-1zM569 207h1v3h-1zM571 201h1v1h-1zM571 207h1v3h-1zM572 201h1v1h-1zM572 207h1v3h-1zM573 201h1v1h-1zM573 207h1v3h-1zM574 199h1v2h-1zM575 201h1v1h-1zM576 201h1v1h-1zM576 207h1v3h-1zM577 201h1v1h-1zM578 201h1v1h-1zM578 207h1v3h-1zM579 201h1v1h-1zM579 207h1v3h-1zM580 201h1v1h-1zM580 207h1v3h-1zM581 201h1v1h-1zM581 207h1v3h-1zM585 201h1v1h-1zM585 207h1v3h-1zM588 258h1v2h-1zM589 258h1v2h-1zM590 251h1v2h-1zM592 251h1v2h-1zM592 258h1v2h-1zM593 251h1v2h-1zM594 251h1v2h-1zM594 258h1v2h-1zM595 251h1v2h-1zM595 258h1v2h-1zM596 251h1v2h-1zM596 258h1v2h-1zM597 251h1v2h-1zM598 251h1v2h-1zM599 251h1v2h-1zM599 258h1v2h-1zM600 251h1v2h-1zM601 251h1v2h-1zM602 251h1v2h-1zM603 251h1v2h-1zM603 258h1v2h-1zM604 251h1v2h-1zM605 251h1v2h-1zM606 202h1v1h-1zM607 209h1v1h-1zM608 201h1v2h-1zM609 201h1v2h-1zM609 209h1v1h-1zM610 209h1v1h-1zM611 201h1v2h-1zM611 209h1v1h-1zM612 201h1v2h-1zM612 209h1v1h-1zM612 210h1v2h-1zM613 202h1v1h-1zM613 209h1v1h-1zM614 201h1v2h-1zM614 209h1v1h-1zM615 209h1v1h-1zM616 201h1v2h-1zM616 209h1v1h-1zM617 201h1v2h-1zM617 209h1v1h-1zM618 201h1v2h-1zM618 209h1v1h-1zM619 209h1v1h-1zM620 202h1v1h-1zM620 209h1v1h-1zM621 201h1v2h-1zM621 209h1v1h-1zM622 202h1v1h-1zM622 209h1v1h-1zM623 209h1v1h-1zM624 202h1v1h-1zM624 209h1v1h-1zM625 209h1v1h-1zM625 210h1v2h-1zM626 202h1v1h-1zM626 209h1v1h-1zM627 201h1v2h-1zM627 209h1v1h-1zM628 201h1v2h-1zM628 209h1v1h-1zM628 210h1v2h-1zM629 201h1v2h-1zM629 209h1v1h-1zM630 201h1v2h-1zM630 209h1v1h-1zM631 201h1v2h-1zM631 209h1v1h-1zM632 201h1v2h-1zM632 209h1v1h-1zM633 201h1v2h-1zM633 209h1v1h-1zM634 209h1v1h-1zM635 201h1v2h-1zM636 209h1v1h-1zM637 209h1v1h-1zM637 210h1v2h-1zM638 201h1v2h-1zM638 199h1v2h-1zM638 209h1v1h-1zM639 201h1v2h-1zM639 209h1v1h-1zM639 210h1v2h-1zM640 201h1v2h-1zM640 209h1v1h-1zM640 210h1v2h-1zM641 201h1v2h-1zM641 209h1v1h-1zM642 201h1v2h-1zM642 209h1v1h-1zM643 202h1v1h-1zM643 209h1v1h-1zM644 201h1v2h-1zM644 209h1v1h-1zM645 201h1v2h-1zM645 209h1v1h-1zM646 201h1v2h-1zM646 209h1v1h-1zM646 210h1v2h-1zM647 201h1v2h-1zM647 209h1v1h-1zM648 202h1v1h-1zM648 209h1v1h-1zM650 209h1v1h-1zM651 201h1v2h-1zM651 209h1v1h-1zM652 201h1v2h-1zM652 209h1v1h-1zM652 210h1v2h-1zM653 201h1v2h-1zM653 209h1v1h-1zM654 201h1v2h-1zM654 209h1v1h-1zM655 209h1v1h-1zM656 209h1v1h-1zM657 201h1v2h-1zM657 209h1v1h-1zM658 209h1v1h-1zM659 209h1v1h-1zM660 202h1v1h-1zM660 209h1v1h-1zM661 201h1v2h-1zM662 201h1v2h-1zM662 209h1v1h-1zM663 209h1v1h-1zM664 201h1v2h-1zM664 209h1v1h-1zM665 201h1v2h-1zM665 209h1v1h-1zM666 202h1v1h-1zM666 209h1v1h-1zM667 202h1v1h-1zM667 209h1v1h-1zM667 210h1v2h-1zM668 209h1v1h-1zM669 202h1v1h-1zM670 201h1v2h-1zM670 199h1v2h-1zM670 209h1v1h-1zM671 202h1v1h-1zM671 209h1v1h-1zM672 202h1v1h-1zM672 209h1v1h-1zM673 201h1v2h-1zM673 209h1v1h-1zM673 210h1v2h-1zM674 202h1v1h-1zM674 209h1v1h-1zM675 201h1v2h-1zM675 209h1v1h-1zM675 210h1v2h-1zM677 201h1v2h-1zM678 201h1v2h-1zM678 209h1v1h-1zM678 210h1v2h-1zM679 201h1v2h-1zM679 209h1v1h-1zM680 201h1v2h-1zM680 209h1v1h-1zM681 201h1v2h-1zM681 209h1v1h-1zM682 201h1v2h-1zM682 209h1v1h-1zM683 202h1v1h-1zM683 209h1v1h-1zM684 202h1v1h-1zM685 201h1v2h-1zM685 209h1v1h-1zM686 202h1v1h-1zM686 209h1v1h-1zM687 201h1v2h-1zM687 209h1v1h-1zM688 202h1v1h-1zM688 209h1v1h-1zM689 201h1v2h-1zM689 209h1v1h-1zM689 210h1v2h-1zM690 202h1v1h-1zM690 209h1v1h-1zM692 201h1v2h-1zM692 209h1v1h-1zM693 209h1v1h-1zM693 210h1v2h-1zM694 202h1v1h-1zM694 209h1v1h-1zM695 209h1v1h-1zM696 201h1v2h-1zM696 209h1v1h-1zM697 209h1v1h-1zM698 201h1v2h-1zM698 209h1v1h-1zM699 202h1v1h-1zM699 209h1v1h-1zM700 202h1v1h-1zM700 199h1v2h-1zM700 209h1v1h-1zM701 202h1v1h-1zM701 209h1v1h-1zM702 202h1v1h-1zM702 209h1v1h-1zM703 201h1v2h-1zM703 209h1v1h-1zM704 201h1v2h-1zM705 201h1v2h-1zM705 209h1v1h-1zM706 209h1v1h-1zM707 202h1v1h-1zM707 209h1v1h-1zM708 202h1v1h-1zM708 209h1v1h-1zM709 202h1v1h-1zM709 209h1v1h-1zM710 201h1v2h-1zM710 209h1v1h-1zM711 201h1v2h-1zM711 209h1v1h-1zM712 201h1v2h-1zM712 209h1v1h-1zM712 210h1v2h-1zM713 201h1v2h-1zM713 209h1v1h-1zM714 201h1v2h-1zM714 209h1v1h-1zM714 210h1v2h-1zM715 201h1v2h-1zM715 209h1v1h-1zM716 209h1v1h-1zM716 210h1v2h-1zM717 202h1v1h-1zM717 209h1v1h-1zM718 202h1v1h-1zM718 209h1v1h-1zM719 209h1v1h-1zM720 201h1v2h-1zM720 209h1v1h-1zM721 201h1v2h-1zM722 201h1v2h-1zM723 209h1v1h-1zM724 201h1v2h-1zM725 201h1v2h-1zM726 202h1v1h-1zM726 209h1v1h-1zM727 209h1v1h-1zM728 201h1v2h-1zM728 209h1v1h-1zM729 201h1v2h-1zM729 209h1v1h-1zM730 202h1v1h-1zM730 209h1v1h-1zM731 201h1v2h-1zM731 209h1v1h-1zM733 209h1v1h-1zM734 201h1v2h-1zM734 209h1v1h-1zM735 201h1v2h-1zM735 209h1v1h-1zM736 201h1v2h-1zM736 209h1v1h-1zM737 209h1v1h-1zM738 201h1v2h-1zM738 209h1v1h-1zM739 201h1v2h-1zM739 209h1v1h-1zM740 201h1v2h-1zM740 209h1v1h-1zM741 209h1v1h-1zM742 209h1v1h-1zM743 202h1v1h-1zM743 209h1v1h-1zM744 202h1v1h-1zM744 209h1v1h-1zM745 201h1v2h-1zM745 209h1v1h-1zM746 201h1v2h-1zM747 201h1v2h-1zM748 202h1v1h-1zM748 209h1v1h-1zM748 210h1v2h-1zM749 209h1v1h-1zM750 201h1v2h-1zM750 209h1v1h-1zM751 201h1v2h-1zM751 209h1v1h-1zM752 201h1v2h-1zM753 201h1v2h-1zM753 209h1v1h-1zM754 201h1v2h-1zM754 209h1v1h-1zM755 201h1v2h-1zM755 209h1v1h-1zM756 209h1v1h-1zM757 201h1v2h-1zM757 209h1v1h-1zM757 210h1v2h-1zM758 202h1v1h-1zM758 209h1v1h-1zM759 201h1v2h-1zM760 201h1v2h-1zM761 201h1v2h-1zM761 209h1v1h-1zM762 202h1v1h-1zM762 209h1v1h-1zM763 202h1v1h-1zM763 209h1v1h-1zM763 210h1v2h-1zM764 201h1v2h-1zM764 209h1v1h-1zM765 209h1v1h-1zM766 209h1v1h-1zM767 201h1v2h-1zM767 209h1v1h-1zM768 210h1v2h-1zM769 201h1v2h-1zM769 209h1v1h-1zM770 201h1v2h-1zM770 209h1v1h-1zM771 202h1v1h-1zM771 209h1v1h-1zM772 201h1v2h-1zM772 209h1v1h-1zM773 202h1v1h-1zM773 209h1v1h-1zM212 206h1v47h-1zM306 206h1v47h-1zM587 206h1v47h-1zM606 206h1v47h-1zM25 64h2v80h-2zM26 144h1v62h-1zM400 64h2v63h-2zM399 127h1v77h-1zM401 127h1v79h-1zM402 196h1v10h-1zM401 206h1v8h-1z" fill="#8a6a00"/>
<path d="M25 207h1v5h-1zM26 207h1v5h-1zM27 207h1v5h-1zM28 207h1v5h-1zM29 207h1v5h-1zM30 207h1v5h-1zM31 207h1v5h-1zM32 207h1v5h-1zM33 207h1v5h-1zM34 207h1v5h-1zM35 207h1v5h-1zM36 207h1v5h-1zM37 207h1v5h-1zM38 207h1v5h-1zM39 207h1v5h-1zM40 207h1v5h-1zM41 207h1v5h-1zM42 207h1v5h-1zM43 207h1v5h-1zM44 202h1v4h-1zM45 202h1v4h-1zM46 202h1v4h-1zM47 202h1v4h-1zM48 202h1v4h-1zM49 202h1v4h-1zM50 202h1v4h-1zM51 202h1v4h-1zM52 202h1v4h-1zM53 202h1v4h-1zM54 202h1v4h-1zM55 202h1v4h-1zM56 202h1v4h-1zM57 202h1v4h-1zM58 202h1v4h-1zM59 202h1v4h-1zM60 202h1v4h-1zM61 202h1v4h-1zM62 202h1v4h-1zM63 202h1v4h-1zM64 202h1v4h-1zM65 202h1v4h-1zM66 202h1v4h-1zM67 202h1v4h-1zM68 202h1v4h-1zM69 202h1v4h-1zM70 202h1v4h-1zM71 202h1v4h-1zM72 202h1v4h-1zM73 202h1v4h-1zM74 202h1v4h-1zM75 202h1v4h-1zM76 202h1v4h-1zM77 202h1v4h-1zM78 202h1v4h-1zM79 202h1v4h-1zM80 202h1v4h-1zM81 202h1v4h-1zM82 202h1v4h-1zM83 202h1v4h-1zM84 202h1v4h-1zM85 202h1v4h-1zM86 202h1v4h-1zM87 202h1v4h-1zM88 202h1v4h-1zM89 202h1v4h-1zM90 202h1v4h-1zM91 202h1v4h-1zM92 202h1v4h-1zM93 202h1v4h-1zM94 202h1v4h-1zM95 202h1v4h-1zM96 202h1v4h-1zM97 202h1v4h-1zM98 202h1v4h-1zM99 202h1v4h-1zM100 202h1v4h-1zM101 202h1v4h-1zM102 202h1v4h-1zM103 202h1v4h-1zM104 202h1v4h-1zM105 202h1v4h-1zM106 202h1v4h-1zM107 202h1v4h-1zM108 202h1v4h-1zM109 202h1v4h-1zM110 202h1v4h-1zM111 202h1v4h-1zM112 202h1v4h-1zM113 202h1v4h-1zM114 202h1v4h-1zM115 202h1v4h-1zM116 202h1v4h-1zM117 202h1v4h-1zM118 202h1v4h-1zM119 202h1v4h-1zM120 202h1v4h-1zM121 202h1v4h-1zM122 202h1v4h-1zM123 202h1v4h-1zM124 202h1v4h-1zM125 202h1v4h-1zM126 202h1v4h-1zM127 202h1v4h-1zM128 202h1v4h-1zM129 202h1v4h-1zM130 202h1v4h-1zM131 202h1v4h-1zM132 202h1v4h-1zM133 202h1v4h-1zM134 202h1v4h-1zM135 202h1v4h-1zM136 202h1v4h-1zM137 202h1v4h-1zM138 202h1v4h-1zM139 202h1v4h-1zM140 202h1v4h-1zM141 202h1v4h-1zM142 202h1v4h-1zM143 202h1v4h-1zM144 202h1v4h-1zM145 202h1v4h-1zM146 202h1v4h-1zM147 202h1v4h-1zM148 202h1v4h-1zM149 202h1v4h-1zM150 202h1v4h-1zM151 202h1v4h-1zM152 202h1v4h-1zM153 202h1v4h-1zM154 202h1v4h-1zM155 202h1v4h-1zM156 202h1v4h-1zM157 202h1v4h-1zM158 202h1v4h-1zM159 202h1v4h-1zM160 202h1v4h-1zM161 202h1v4h-1zM162 202h1v4h-1zM163 202h1v4h-1zM164 202h1v4h-1zM165 202h1v4h-1zM166 202h1v4h-1zM167 202h1v4h-1zM168 202h1v4h-1zM169 202h1v4h-1zM170 202h1v4h-1zM171 202h1v4h-1zM172 202h1v4h-1zM173 202h1v4h-1zM174 202h1v4h-1zM175 202h1v4h-1zM176 202h1v4h-1zM177 202h1v4h-1zM178 202h1v4h-1zM179 202h1v4h-1zM180 202h1v4h-1zM181 202h1v4h-1zM182 202h1v4h-1zM183 202h1v4h-1zM184 202h1v4h-1zM185 202h1v4h-1zM186 202h1v4h-1zM187 202h1v4h-1zM188 202h1v4h-1zM189 202h1v4h-1zM190 202h1v4h-1zM191 202h1v4h-1zM192 202h1v4h-1zM193 202h1v4h-1zM194 202h1v4h-1zM195 202h1v4h-1zM196 202h1v4h-1zM197 202h1v4h-1zM198 202h1v4h-1zM199 202h1v4h-1zM200 202h1v4h-1zM201 202h1v4h-1zM202 202h1v4h-1zM203 202h1v4h-1zM204 202h1v4h-1zM205 202h1v4h-1zM206 202h1v4h-1zM207 202h1v4h-1zM208 202h1v4h-1zM209 202h1v4h-1zM210 202h1v4h-1zM211 202h1v4h-1zM212 253h1v5h-1zM213 253h1v5h-1zM214 253h1v5h-1zM215 253h1v5h-1zM216 253h1v5h-1zM217 253h1v5h-1zM218 253h1v5h-1zM219 253h1v5h-1zM220 253h1v5h-1zM221 253h1v5h-1zM222 253h1v5h-1zM223 253h1v5h-1zM224 253h1v5h-1zM225 253h1v5h-1zM226 253h1v5h-1zM227 253h1v5h-1zM228 253h1v5h-1zM229 253h1v5h-1zM230 253h1v5h-1zM231 253h1v5h-1zM232 253h1v5h-1zM233 253h1v5h-1zM234 253h1v5h-1zM235 253h1v5h-1zM236 253h1v5h-1zM237 253h1v5h-1zM238 253h1v5h-1zM239 253h1v5h-1zM240 253h1v5h-1zM241 253h1v5h-1zM242 253h1v5h-1zM243 253h1v5h-1zM244 253h1v5h-1zM245 253h1v5h-1zM246 253h1v5h-1zM247 253h1v5h-1zM248 253h1v5h-1zM249 253h1v5h-1zM250 253h1v5h-1zM251 253h1v5h-1zM252 253h1v5h-1zM253 253h1v5h-1zM254 253h1v5h-1zM255 253h1v5h-1zM256 253h1v5h-1zM257 253h1v5h-1zM258 253h1v5h-1zM259 253h1v5h-1zM260 253h1v5h-1zM261 253h1v5h-1zM262 253h1v5h-1zM263 253h1v5h-1zM264 253h1v5h-1zM265 253h1v5h-1zM266 253h1v5h-1zM267 253h1v5h-1zM268 253h1v5h-1zM269 253h1v5h-1zM270 253h1v5h-1zM271 253h1v5h-1zM272 253h1v5h-1zM273 253h1v5h-1zM274 253h1v5h-1zM275 253h1v5h-1zM276 253h1v5h-1zM277 253h1v5h-1zM278 253h1v5h-1zM279 253h1v5h-1zM280 253h1v5h-1zM281 253h1v5h-1zM282 253h1v5h-1zM283 253h1v5h-1zM284 253h1v5h-1zM285 253h1v5h-1zM286 253h1v5h-1zM287 253h1v5h-1zM288 253h1v5h-1zM289 253h1v5h-1zM290 253h1v5h-1zM291 253h1v5h-1zM292 253h1v5h-1zM293 253h1v5h-1zM294 253h1v5h-1zM295 253h1v5h-1zM296 253h1v5h-1zM297 253h1v5h-1zM298 253h1v5h-1zM299 253h1v5h-1zM300 253h1v5h-1zM301 253h1v5h-1zM302 253h1v5h-1zM303 253h1v5h-1zM304 253h1v5h-1zM305 253h1v5h-1zM306 203h1v3h-1zM306 207h1v2h-1zM307 203h1v3h-1zM307 207h1v2h-1zM308 203h1v3h-1zM308 207h1v2h-1zM309 203h1v3h-1zM309 207h1v2h-1zM310 203h1v3h-1zM310 207h1v2h-1zM311 203h1v3h-1zM311 207h1v2h-1zM312 203h1v3h-1zM312 207h1v2h-1zM313 203h1v3h-1zM313 207h1v2h-1zM314 203h1v3h-1zM314 207h1v2h-1zM315 203h1v3h-1zM315 207h1v2h-1zM316 203h1v3h-1zM316 207h1v2h-1zM317 203h1v3h-1zM317 207h1v2h-1zM318 203h1v3h-1zM318 207h1v2h-1zM319 203h1v3h-1zM319 207h1v2h-1zM320 203h1v3h-1zM320 207h1v2h-1zM321 203h1v3h-1zM321 207h1v2h-1zM322 203h1v3h-1zM322 207h1v2h-1zM323 203h1v3h-1zM323 207h1v2h-1zM324 203h1v3h-1zM324 207h1v2h-1zM325 203h1v3h-1zM325 207h1v2h-1zM326 203h1v3h-1zM326 207h1v2h-1zM327 203h1v3h-1zM327 207h1v2h-1zM328 203h1v3h-1zM328 207h1v2h-1zM329 203h1v3h-1zM329 207h1v2h-1zM330 203h1v3h-1zM330 207h1v2h-1zM331 203h1v3h-1zM331 207h1v2h-1zM332 203h1v3h-1zM332 207h1v2h-1zM333 203h1v3h-1zM333 207h1v2h-1zM334 203h1v3h-1zM334 207h1v2h-1zM335 203h1v3h-1zM335 207h1v2h-1zM336 203h1v3h-1zM336 207h1v2h-1zM337 203h1v3h-1zM337 207h1v2h-1zM338 203h1v3h-1zM338 207h1v2h-1zM339 203h1v3h-1zM339 207h1v2h-1zM340 203h1v3h-1zM340 207h1v2h-1zM341 203h1v3h-1zM341 207h1v2h-1zM342 203h1v3h-1zM342 207h1v2h-1zM343 203h1v3h-1zM343 207h1v2h-1zM344 203h1v3h-1zM344 207h1v2h-1zM345 203h1v3h-1zM345 207h1v2h-1zM346 203h1v3h-1zM346 207h1v2h-1zM347 203h1v3h-1zM347 207h1v2h-1zM348 203h1v3h-1zM348 207h1v2h-1zM349 203h1v3h-1zM349 207h1v2h-1zM350 203h1v3h-1zM350 207h1v2h-1zM351 203h1v3h-1zM351 207h1v2h-1zM352 203h1v3h-1zM352 207h1v2h-1zM353 203h1v3h-1zM353 207h1v2h-1zM354 203h1v3h-1zM354 207h1v2h-1zM355 203h1v3h-1zM356 203h1v3h-1zM356 207h1v2h-1zM357 203h1v3h-1zM357 207h1v2h-1zM358 203h1v3h-1zM358 207h1v2h-1zM359 203h1v3h-1zM359 207h1v2h-1zM360 203h1v3h-1zM360 207h1v2h-1zM361 203h1v3h-1zM361 207h1v2h-1zM362 203h1v3h-1zM362 207h1v2h-1zM363 203h1v3h-1zM363 207h1v2h-1zM364 203h1v3h-1zM364 207h1v2h-1zM365 203h1v3h-1zM365 207h1v2h-1zM366 203h1v3h-1zM366 207h1v2h-1zM367 203h1v3h-1zM367 207h1v2h-1zM368 203h1v3h-1zM368 207h1v2h-1zM369 203h1v3h-1zM369 207h1v2h-1zM370 203h1v3h-1zM370 207h1v2h-1zM371 203h1v3h-1zM371 207h1v2h-1zM372 203h1v3h-1zM372 207h1v2h-1zM373 203h1v3h-1zM373 207h1v2h-1zM374 203h1v3h-1zM374 207h1v2h-1zM375 203h1v3h-1zM375 207h1v2h-1zM376 203h1v3h-1zM376 207h1v2h-1zM377 203h1v3h-1zM378 203h1v3h-1zM378 207h1v2h-1zM379 203h1v3h-1zM379 207h1v2h-1zM380 203h1v3h-1zM380 207h1v2h-1zM381 203h1v3h-1zM381 207h1v2h-1zM382 203h1v3h-1zM382 207h1v2h-1zM383 203h1v3h-1zM383 207h1v2h-1zM384 203h1v3h-1zM384 207h1v2h-1zM385 203h1v3h-1zM385 207h1v2h-1zM386 203h1v3h-1zM386 207h1v2h-1zM387 203h1v3h-1zM387 207h1v2h-1zM388 203h1v3h-1zM388 207h1v2h-1zM389 203h1v3h-1zM389 207h1v2h-1zM390 203h1v3h-1zM390 207h1v2h-1zM391 203h1v3h-1zM391 207h1v2h-1zM392 203h1v3h-1zM392 207h1v2h-1zM393 203h1v3h-1zM393 207h1v2h-1zM394 203h1v3h-1zM394 207h1v2h-1zM395 203h1v3h-1zM395 207h1v2h-1zM396 203h1v3h-1zM396 207h1v2h-1zM397 203h1v3h-1zM397 207h1v2h-1zM398 203h1v3h-1zM398 207h1v2h-1zM399 203h1v3h-1zM399 207h1v2h-1zM400 207h1v5h-1zM401 207h1v5h-1zM402 207h1v5h-1zM403 207h1v5h-1zM404 207h1v5h-1zM405 207h1v5h-1zM406 207h1v5h-1zM407 207h1v5h-1zM408 207h1v5h-1zM409 207h1v5h-1zM410 207h1v5h-1zM411 207h1v5h-1zM412 207h1v5h-1zM413 207h1v5h-1zM414 207h1v5h-1zM415 207h1v5h-1zM416 207h1v5h-1zM417 207h1v5h-1zM418 207h1v5h-1zM419 207h1v5h-1zM420 202h1v4h-1zM421 202h1v4h-1zM422 202h1v4h-1zM423 202h1v4h-1zM424 202h1v4h-1zM425 202h1v4h-1zM426 202h1v4h-1zM427 202h1v4h-1zM428 202h1v4h-1zM429 202h1v4h-1zM430 202h1v4h-1zM431 202h1v4h-1zM432 202h1v4h-1zM433 202h1v4h-1zM434 202h1v4h-1zM435 202h1v4h-1zM436 202h1v4h-1zM437 202h1v4h-1zM438 202h1v4h-1zM439 202h1v4h-1zM440 202h1v4h-1zM441 202h1v4h-1zM442 202h1v4h-1zM443 202h1v4h-1zM444 202h1v4h-1zM445 202h1v4h-1zM446 202h1v4h-1zM447 202h1v4h-1zM448 202h1v4h-1zM449 202h1v4h-1zM450 202h1v4h-1zM451 202h1v4h-1zM452 202h1v4h-1zM453 202h1v4h-1zM454 202h1v4h-1zM455 202h1v4h-1zM456 202h1v4h-1zM457 202h1v4h-1zM458 202h1v4h-1zM459 202h1v4h-1zM460 202h1v4h-1zM461 202h1v4h-1zM462 202h1v4h-1zM463 202h1v4h-1zM464 202h1v4h-1zM465 202h1v4h-1zM466 202h1v4h-1zM467 202h1v4h-1zM468 202h1v4h-1zM469 202h1v4h-1zM470 202h1v4h-1zM471 202h1v4h-1zM472 202h1v4h-1zM473 202h1v4h-1zM474 202h1v4h-1zM475 202h1v4h-1zM476 202h1v4h-1zM477 202h1v4h-1zM478 202h1v4h-1zM479 202h1v4h-1zM480 202h1v4h-1zM481 202h1v4h-1zM482 202h1v4h-1zM483 202h1v4h-1zM484 202h1v4h-1zM485 202h1v4h-1zM486 202h1v4h-1zM487 202h1v4h-1zM488 202h1v4h-1zM489 202h1v4h-1zM490 202h1v4h-1zM491 202h1v4h-1zM492 202h1v4h-1zM493 202h1v4h-1zM494 202h1v4h-1zM495 202h1v4h-1zM496 202h1v4h-1zM497 202h1v4h-1zM498 202h1v4h-1zM499 202h1v4h-1zM500 202h1v4h-1zM501 202h1v4h-1zM502 202h1v4h-1zM503 202h1v4h-1zM504 202h1v4h-1zM505 202h1v4h-1zM506 202h1v4h-1zM507 202h1v4h-1zM508 202h1v4h-1zM509 202h1v4h-1zM510 202h1v4h-1zM511 202h1v4h-1zM512 202h1v4h-1zM513 202h1v4h-1zM514 202h1v4h-1zM515 202h1v4h-1zM516 202h1v4h-1zM517 202h1v4h-1zM518 202h1v4h-1zM519 202h1v4h-1zM520 202h1v4h-1zM521 202h1v4h-1zM522 202h1v4h-1zM523 202h1v4h-1zM524 202h1v4h-1zM525 202h1v4h-1zM526 202h1v4h-1zM527 202h1v4h-1zM528 202h1v4h-1zM529 202h1v4h-1zM530 202h1v4h-1zM531 202h1v4h-1zM532 202h1v4h-1zM533 202h1v4h-1zM534 202h1v4h-1zM535 202h1v4h-1zM536 202h1v4h-1zM537 202h1v4h-1zM538 202h1v4h-1zM539 202h1v4h-1zM540 202h1v4h-1zM541 202h1v4h-1zM542 202h1v4h-1zM543 202h1v4h-1zM544 202h1v4h-1zM545 202h1v4h-1zM546 202h1v4h-1zM547 202h1v4h-1zM548 202h1v4h-1zM549 202h1v4h-1zM550 202h1v4h-1zM551 202h1v4h-1zM552 202h1v4h-1zM553 202h1v4h-1zM554 202h1v4h-1zM555 202h1v4h-1zM556 202h1v4h-1zM557 202h1v4h-1zM558 202h1v4h-1zM559 202h1v4h-1zM560 202h1v4h-1zM561 202h1v4h-1zM562 202h1v4h-1zM563 202h1v4h-1zM564 202h1v4h-1zM565 202h1v4h-1zM566 202h1v4h-1zM567 202h1v4h-1zM568 202h1v4h-1zM569 202h1v4h-1zM570 202h1v4h-1zM571 202h1v4h-1zM572 202h1v4h-1zM573 202h1v4h-1zM574 202h1v4h-1zM575 202h1v4h-1zM576 202h1v4h-1zM577 202h1v4h-1zM578 202h1v4h-1zM579 202h1v4h-1zM580 202h1v4h-1zM581 202h1v4h-1zM582 202h1v4h-1zM583 202h1v4h-1zM584 202h1v4h-1zM585 202h1v4h-1zM586 202h1v4h-1zM587 253h1v5h-1zM588 253h1v5h-1zM589 253h1v5h-1zM590 253h1v5h-1zM591 253h1v5h-1zM592 253h1v5h-1zM593 253h1v5h-1zM594 253h1v5h-1zM595 253h1v5h-1zM596 253h1v5h-1zM597 253h1v5h-1zM598 253h1v5h-1zM599 253h1v5h-1zM600 253h1v5h-1zM601 253h1v5h-1zM602 253h1v5h-1zM603 253h1v5h-1zM604 253h1v5h-1zM605 253h1v5h-1zM606 203h1v3h-1zM606 207h1v2h-1zM607 203h1v3h-1zM607 207h1v2h-1zM608 203h1v3h-1zM608 207h1v2h-1zM609 203h1v3h-1zM609 207h1v2h-1zM610 203h1v3h-1zM610 207h1v2h-1zM611 203h1v3h-1zM611 207h1v2h-1zM612 203h1v3h-1zM612 207h1v2h-1zM613 203h1v3h-1zM613 207h1v2h-1zM614 203h1v3h-1zM614 207h1v2h-1zM615 203h1v3h-1zM615 207h1v2h-1zM616 203h1v3h-1zM616 207h1v2h-1zM617 203h1v3h-1zM617 207h1v2h-1zM618 203h1v3h-1zM618 207h1v2h-1zM619 203h1v3h-1zM619 207h1v2h-1zM620 203h1v3h-1zM620 207h1v2h-1zM621 203h1v3h-1zM621 207h1v2h-1zM622 203h1v3h-1zM622 207h1v2h-1zM623 203h1v3h-1zM623 207h1v2h-1zM624 203h1v3h-1zM624 207h1v2h-1zM625 203h1v3h-1zM625 207h1v2h-1zM626 203h1v3h-1zM626 207h1v2h-1zM627 203h1v3h-1zM627 207h1v2h-1zM628 203h1v3h-1zM628 207h1v2h-1zM629 203h1v3h-1zM629 207h1v2h-1zM630 203h1v3h-1zM631 203h1v3h-1zM631 207h1v2h-1zM632 203h1v3h-1zM632 207h1v2h-1zM633 203h1v3h-1zM633 207h1v2h-1zM634 203h1v3h-1zM634 207h1v2h-1zM635 203h1v3h-1zM635 207h1v2h-1zM636 203h1v3h-1zM636 207h1v2h-1zM637 203h1v3h-1zM637 207h1v2h-1zM638 203h1v3h-1zM638 207h1v2h-1zM639 203h1v3h-1zM639 207h1v2h-1zM640 203h1v3h-1zM640 207h1v2h-1zM641 203h1v3h-1zM641 207h1v2h-1zM642 203h1v3h-1zM642 207h1v2h-1zM643 203h1v3h-1zM643 207h1v2h-1zM644 203h1v3h-1zM644 207h1v2h-1zM645 203h1v3h-1zM645 207h1v2h-1zM646 203h1v3h-1zM647 203h1v3h-1zM647 207h1v2h-1zM648 203h1v3h-1zM648 207h1v2h-1zM649 203h1v3h-1zM649 207h1v2h-1zM650 203h1v3h-1zM650 207h1v2h-1zM651 203h1v3h-1zM651 207h1v2h-1zM652 203h1v3h-1zM652 207h1v2h-1zM653 203h1v3h-1zM653 207h1v2h-1zM654 203h1v3h-1zM654 207h1v2h-1zM655 203h1v3h-1zM655 207h1v2h-1zM656 203h1v3h-1zM656 207h1v2h-1zM657 203h1v3h-1zM657 207h1v2h-1zM658 203h1v3h-1zM658 207h1v2h-1zM659 203h1v3h-1zM659 207h1v2h-1zM660 203h1v3h-1zM660 207h1v2h-1zM661 203h1v3h-1zM661 207h1v2h-1zM662 203h1v3h-1zM662 207h1v2h-1zM663 203h1v3h-1zM663 207h1v2h-1zM664 203h1v3h-1zM664 207h1v2h-1zM665 203h1v3h-1zM665 207h1v2h-1zM666 203h1v3h-1zM666 207h1v2h-1zM667 203h1v3h-1zM667 207h1v2h-1zM668 203h1v3h-1zM668 207h1v2h-1zM669 203h1v3h-1zM669 207h1v2h-1zM670 203h1v3h-1zM670 207h1v2h-1zM671 203h1v3h-1zM671 207h1v2h-1zM672 203h1v3h-1zM672 207h1v2h-1zM673 203h1v3h-1zM673 207h1v2h-1zM674 203h1v3h-1zM674 207h1v2h-1zM675 203h1v3h-1zM675 207h1v2h-1zM676 203h1v3h-1zM676 207h1v2h-1zM677 203h1v3h-1zM677 207h1v2h-1zM678 203h1v3h-1zM678 207h1v2h-1zM679 203h1v3h-1zM679 207h1v2h-1zM680 203h1v3h-1zM680 207h1v2h-1zM681 203h1v3h-1zM681 207h1v2h-1zM682 203h1v3h-1zM682 207h1v2h-1zM683 203h1v3h-1zM683 207h1v2h-1zM684 203h1v3h-1zM684 207h1v2h-1zM685 203h1v3h-1zM685 207h1v2h-1zM686 203h1v3h-1zM686 207h1v2h-1zM687 203h1v3h-1zM687 207h1v2h-1zM688 203h1v3h-1zM688 207h1v2h-1zM689 203h1v3h-1zM689 207h1v2h-1zM690 203h1v3h-1zM690 207h1v2h-1zM691 203h1v3h-1zM691 207h1v2h-1zM692 203h1v3h-1zM692 207h1v2h-1zM693 203h1v3h-1zM693 207h1v2h-1zM694 203h1v3h-1zM694 207h1v2h-1zM695 203h1v3h-1zM695 207h1v2h-1zM696 203h1v3h-1zM696 207h1v2h-1zM697 203h1v3h-1zM697 207h1v2h-1zM698 203h1v3h-1zM698 207h1v2h-1zM699 203h1v3h-1zM699 207h1v2h-1zM700 203h1v3h-1zM700 207h1v2h-1zM701 203h1v3h-1zM701 207h1v2h-1zM702 203h1v3h-1zM702 207h1v2h-1zM703 203h1v3h-1zM703 207h1v2h-1zM704 203h1v3h-1zM704 207h1v2h-1zM705 203h1v3h-1zM705 207h1v2h-1zM706 203h1v3h-1zM706 207h1v2h-1zM707 203h1v3h-1zM707 207h1v2h-1zM708 203h1v3h-1zM708 207h1v2h-1zM709 203h1v3h-1zM709 207h1v2h-1zM710 203h1v3h-1zM710 207h1v2h-1zM711 203h1v3h-1zM711 207h1v2h-1zM712 203h1v3h-1zM712 207h1v2h-1zM713 203h1v3h-1zM713 207h1v2h-1zM714 203h1v3h-1zM714 207h1v2h-1zM715 203h1v3h-1zM715 207h1v2h-1zM716 203h1v3h-1zM716 207h1v2h-1zM717 203h1v3h-1zM717 207h1v2h-1zM718 203h1v3h-1zM718 207h1v2h-1zM719 203h1v3h-1zM719 207h1v2h-1zM720 203h1v3h-1zM720 207h1v2h-1zM721 203h1v3h-1zM721 207h1v2h-1zM722 203h1v3h-1zM722 207h1v2h-1zM723 203h1v3h-1zM723 207h1v2h-1zM724 203h1v3h-1zM724 207h1v2h-1zM725 203h1v3h-1zM725 207h1v2h-1zM726 203h1v3h-1zM726 207h1v2h-1zM727 203h1v3h-1zM727 207h1v2h-1zM728 203h1v3h-1zM728 207h1v2h-1zM729 203h1v3h-1zM729 207h1v2h-1zM730 203h1v3h-1zM730 207h1v2h-1zM731 203h1v3h-1zM731 207h1v2h-1zM732 203h1v3h-1zM732 207h1v2h-1zM733 203h1v3h-1zM733 207h1v2h-1zM734 203h1v3h-1zM734 207h1v2h-1zM735 203h1v3h-1zM736 203h1v3h-1zM736 207h1v2h-1zM737 203h1v3h-1zM737 207h1v2h-1zM738 203h1v3h-1zM738 207h1v2h-1zM739 203h1v3h-1zM739 207h1v2h-1zM740 203h1v3h-1zM740 207h1v2h-1zM741 203h1v3h-1zM741 207h1v2h-1zM742 203h1v3h-1zM742 207h1v2h-1zM743 203h1v3h-1zM743 207h1v2h-1zM744 203h1v3h-1zM744 207h1v2h-1zM745 203h1v3h-1zM745 207h1v2h-1zM746 203h1v3h-1zM746 207h1v2h-1zM747 203h1v3h-1zM747 207h1v2h-1zM748 203h1v3h-1zM748 207h1v2h-1zM749 203h1v3h-1zM749 207h1v2h-1zM750 203h1v3h-1zM750 207h1v2h-1zM751 203h1v3h-1zM751 207h1v2h-1zM752 203h1v3h-1zM752 207h1v2h-1zM753 203h1v3h-1zM753 207h1v2h-1zM754 203h1v3h-1zM754 207h1v2h-1zM755 203h1v3h-1zM755 207h1v2h-1zM756 203h1v3h-1zM756 207h1v2h-1zM757 203h1v3h-1zM757 207h1v2h-1zM758 203h1v3h-1zM758 207h1v2h-1zM759 203h1v3h-1zM759 207h1v2h-1zM760 203h1v3h-1zM761 203h1v3h-1zM761 207h1v2h-1zM762 203h1v3h-1zM762 207h1v2h-1zM763 203h1v3h-1zM763 207h1v2h-1zM764 203h1v3h-1zM764 207h1v2h-1zM765 203h1v3h-1zM765 207h1v2h-1zM766 203h1v3h-1zM766 207h1v2h-1zM767 203h1v3h-1zM767 207h1v2h-1zM768 203h1v3h-1zM768 207h1v2h-1zM769 203h1v3h-1zM769 207h1v2h-1zM770 203h1v3h-1zM770 207h1v2h-1zM771 203h1v3h-1zM771 207h1v2h-1zM772 203h1v3h-1zM772 207h1v2h-1zM773 203h1v3h-1zM773 207h1v2h-1zM25 55h1v9h-1zM26 57h1v7h-1zM400 57h1v7h-1zM401 59h1v5h-1z" fill="#ffcc00"/>
<path d="M25 229h1v2h-1zM26 228h1v1h-1zM27 228h1v1h-1zM27 229h1v2h-1zM28 228h1v1h-1zM29 228h1v1h-1zM31 228h1v1h-1zM33 228h1v1h-1zM34 228h1v1h-1zM36 228h1v1h-1zM38 228h1v1h-1zM42 228h1v1h-1zM44 218h1v1h-1zM44 224h1v2h-1zM45 218h1v1h-1zM47 224h1v2h-1zM48 218h1v1h-1zM48 224h1v2h-1zM49 218h1v1h-1zM50 218h1v1h-1zM51 218h1v1h-1zM52 218h1v1h-1zM52 224h1v2h-1zM53 218h1v1h-1zM53 215h1v3h-1zM54 218h1v1h-1zM54 224h1v2h-1zM55 218h1v1h-1zM55 224h1v2h-1zM56 218h1v1h-1zM56 215h1v3h-1zM57 218h1v1h-1zM58 218h1v1h-1zM59 218h1v1h-1zM60 218h1v1h-1zM61 218h1v1h-1zM62 224h1v2h-1zM63 218h1v1h-1zM65 218h1v1h-1zM66 218h1v1h-1zM67 218h1v1h-1zM68 218h1v1h-1zM69 218h1v1h-1zM70 218h1v1h-1zM70 224h1v2h-1zM71 218h1v1h-1zM73 218h1v1h-1zM73 224h1v2h-1zM74 218h1v1h-1zM76 218h1v1h-1zM77 218h1v1h-1zM79 224h1v2h-1zM80 218h1v1h-1zM81 218h1v1h-1zM81 224h1v2h-1zM83 218h1v1h-1zM83 224h1v2h-1zM84 218h1v1h-1zM84 224h1v2h-1zM85 218h1v1h-1zM86 218h1v1h-1zM87 224h1v2h-1zM88 218h1v1h-1zM88 224h1v2h-1zM90 224h1v2h-1zM91 218h1v1h-1zM91 224h1v2h-1zM92 218h1v1h-1zM92 224h1v2h-1zM93 218h1v1h-1zM93 224h1v2h-1zM94 218h1v1h-1zM95 218h1v1h-1zM97 218h1v1h-1zM97 224h1v2h-1zM98 218h1v1h-1zM99 218h1v1h-1zM101 218h1v1h-1zM101 215h1v3h-1zM101 224h1v2h-1zM102 218h1v1h-1zM102 215h1v3h-1zM102 224h1v2h-1zM103 218h1v1h-1zM103 224h1v2h-1zM104 218h1v1h-1zM105 218h1v1h-1zM106 218h1v1h-1zM108 218h1v1h-1zM108 224h1v2h-1zM110 218h1v1h-1zM111 218h1v1h-1zM111 224h1v2h-1zM112 218h1v1h-1zM113 218h1v1h-1zM114 218h1v1h-1zM114 224h1v2h-1zM115 218h1v1h-1zM116 218h1v1h-1zM116 224h1v2h-1zM117 215h1v3h-1zM118 218h1v1h-1zM119 218h1v1h-1zM119 224h1v2h-1zM120 218h1v1h-1zM121 218h1v1h-1zM121 224h1v2h-1zM122 215h1v3h-1zM123 218h1v1h-1zM123 224h1v2h-1zM124 218h1v1h-1zM124 224h1v2h-1zM126 218h1v1h-1zM128 218h1v1h-1zM129 218h1v1h-1zM129 224h1v2h-1zM130 218h1v1h-1zM130 224h1v2h-1zM131 218h1v1h-1zM132 224h1v2h-1zM133 218h1v1h-1zM133 224h1v2h-1zM134 218h1v1h-1zM135 218h1v1h-1zM135 224h1v2h-1zM136 218h1v1h-1zM136 224h1v2h-1zM137 224h1v2h-1zM138 218h1v1h-1zM138 224h1v2h-1zM139 224h1v2h-1zM140 218h1v1h-1zM141 218h1v1h-1zM142 218h1v1h-1zM142 224h1v2h-1zM143 218h1v1h-1zM144 218h1v1h-1zM145 218h1v1h-1zM145 224h1v2h-1zM146 218h1v1h-1zM147 224h1v2h-1zM148 218h1v1h-1zM149 218h1v1h-1zM149 224h1v2h-1zM150 224h1v2h-1zM151 224h1v2h-1zM152 218h1v1h-1zM152 224h1v2h-1zM153 224h1v2h-1zM154 218h1v1h-1zM154 224h1v2h-1zM155 218h1v1h-1zM155 224h1v2h-1zM156 218h1v1h-1zM157 218h1v1h-1zM158 218h1v1h-1zM159 218h1v1h-1zM159 224h1v2h-1zM160 218h1v1h-1zM161 218h1v1h-1zM161 215h1v3h-1zM162 218h1v1h-1zM163 218h1v1h-1zM164 218h1v1h-1zM165 218h1v1h-1zM165 224h1v2h-1zM166 218h1v1h-1zM167 224h1v2h-1zM168 218h1v1h-1zM168 224h1v2h-1zM169 224h1v2h-1zM170 218h1v1h-1zM170 224h1v2h-1zM171 224h1v2h-1zM172 218h1v1h-1zM174 218h1v1h-1zM175 218h1v1h-1zM176 218h1v1h-1zM176 224h1v2h-1zM177 218h1v1h-1zM177 224h1v2h-1zM178 218h1v1h-1zM178 224h1v2h-1zM179 218h1v1h-1zM180 218h1v1h-1zM180 224h1v2h-1zM181 218h1v1h-1zM181 224h1v2h-1zM182 218h1v1h-1zM182 224h1v2h-1zM184 218h1v1h-1zM185 218h1v1h-1zM185 224h1v2h-1zM186 218h1v1h-1zM187 224h1v2h-1zM188 218h1v1h-1zM188 224h1v2h-1zM189 224h1v2h-1zM190 218h1v1h-1zM190 224h1v2h-1zM191 218h1v1h-1zM191 224h1v2h-1zM192 218h1v1h-1zM192 224h1v2h-1zM193 218h1v1h-1zM193 224h1v2h-1zM194 218h1v1h-1zM195 218h1v1h-1zM195 224h1v2h-1zM196 218h1v1h-1zM196 224h1v2h-1zM197 218h1v1h-1zM197 224h1v2h-1zM199 224h1v2h-1zM200 218h1v1h-1zM200 224h1v2h-1zM201 218h1v1h-1zM202 218h1v1h-1zM202 224h1v2h-1zM204 218h1v1h-1zM205 224h1v2h-1zM206 218h1v1h-1zM207 218h1v1h-1zM207 224h1v2h-1zM208 218h1v1h-1zM208 224h1v2h-1zM209 218h1v1h-1zM210 218h1v1h-1zM210 215h1v3h-1zM210 224h1v2h-1zM211 218h1v1h-1zM211 224h1v2h-1zM212 271h1v1h-1zM212 277h1v2h-1zM213 271h1v1h-1zM214 271h1v1h-1zM215 271h1v1h-1zM216 271h1v1h-1zM216 277h1v2h-1zM217 268h1v3h-1zM218 271h1v1h-1zM219 271h1v1h-1zM219 277h1v2h-1zM220 277h1v2h-1zM221 271h1v1h-1zM221 277h1v2h-1zM222 271h1v1h-1zM222 277h1v2h-1zM223 277h1v2h-1zM224 277h1v2h-1zM225 271h1v1h-1zM225 277h1v2h-1zM227 271h1v1h-1zM228 271h1v1h-1zM228 277h1v2h-1zM230 271h1v1h-1zM230 277h1v2h-1zM231 271h1v1h-1zM232 271h1v1h-1zM234 277h1v2h-1zM235 277h1v2h-1zM237 271h1v1h-1zM237 277h1v2h-1zM238 271h1v1h-1zM238 277h1v2h-1zM239 277h1v2h-1zM240 277h1v2h-1zM243 271h1v1h-1zM244 271h1v1h-1zM244 277h1v2h-1zM246 271h1v1h-1zM246 277h1v2h-1zM248 271h1v1h-1zM249 271h1v1h-1zM249 277h1v2h-1zM250 271h1v1h-1zM250 277h1v2h-1zM252 271h1v1h-1zM253 271h1v1h-1zM254 277h1v2h-1zM255 277h1v2h-1zM256 271h1v1h-1zM256 277h1v2h-1zM259 271h1v1h-1zM259 277h1v2h-1zM260 271h1v1h-1zM261 271h1v1h-1zM263 271h1v1h-1zM265 271h1v1h-1zM265 277h1v2h-1zM266 271h1v1h-1zM266 277h1v2h-1zM267 271h1v1h-1zM268 277h1v2h-1zM269 271h1v1h-1zM270 271h1v1h-1zM271 271h1v1h-1zM272 271h1v1h-1zM272 277h1v2h-1zM273 277h1v2h-1zM274 271h1v1h-1zM274 277h1v2h-1zM275 271h1v1h-1zM276 271h1v1h-1zM276 277h1v2h-1zM278 271h1v1h-1zM278 277h1v2h-1zM279 277h1v2h-1zM281 271h1v1h-1zM281 277h1v2h-1zM282 271h1v1h-1zM282 277h1v2h-1zM283 271h1v1h-1zM283 277h1v2h-1zM284 271h1v1h-1zM285 277h1v2h-1zM286 271h1v1h-1zM286 277h1v2h-1zM287 277h1v2h-1zM288 271h1v1h-1zM290 271h1v1h-1zM290 277h1v2h-1zM291 271h1v1h-1zM291 277h1v2h-1zM292 271h1v1h-1zM292 277h1v2h-1zM293 268h1v3h-1zM294 271h1v1h-1zM294 277h1v2h-1zM295 271h1v1h-1zM296 271h1v1h-1zM296 277h1v2h-1zM297 271h1v1h-1zM297 277h1v2h-1zM298 271h1v1h-1zM298 277h1v2h-1zM299 277h1v2h-1zM301 271h1v1h-1zM302 271h1v1h-1zM302 277h1v2h-1zM304 271h1v1h-1zM304 277h1v2h-1zM305 271h1v1h-1zM306 218h1v1h-1zM308 218h1v1h-1zM308 224h1v2h-1zM309 218h1v1h-1zM311 218h1v1h-1zM311 215h1v3h-1zM312 218h1v1h-1zM312 224h1v2h-1zM313 218h1v1h-1zM314 218h1v1h-1zM314 215h1v3h-1zM315 218h1v1h-1zM315 224h1v2h-1zM316 218h1v1h-1zM316 224h1v2h-1zM317 218h1v1h-1zM318 218h1v1h-1zM318 224h1v2h-1zM319 218h1v1h-1zM319 215h1v3h-1zM319 224h1v2h-1zM321 218h1v1h-1zM322 218h1v1h-1zM322 224h1v2h-1zM323 224h1v2h-1zM324 218h1v1h-1zM324 224h1v2h-1zM325 218h1v1h-1zM325 224h1v2h-1zM326 218h1v1h-1zM326 224h1v2h-1zM327 218h1v1h-1zM327 224h1v2h-1zM328 218h1v1h-1zM328 224h1v2h-1zM330 218h1v1h-1zM331 218h1v1h-1zM331 224h1v2h-1zM333 218h1v1h-1zM334 218h1v1h-1zM334 224h1v2h-1zM335 218h1v1h-1zM336 218h1v1h-1zM336 224h1v2h-1zM337 218h1v1h-1zM337 224h1v2h-1zM338 218h1v1h-1zM339 224h1v2h-1zM341 218h1v1h-1zM341 224h1v2h-1zM342 218h1v1h-1zM343 218h1v1h-1zM343 224h1v2h-1zM344 218h1v1h-1zM345 218h1v1h-1zM345 224h1v2h-1zM346 224h1v2h-1zM347 218h1v1h-1zM348 218h1v1h-1zM349 218h1v1h-1zM349 224h1v2h-1zM350 218h1v1h-1zM351 218h1v1h-1zM352 218h1v1h-1zM352 224h1v2h-1zM353 224h1v2h-1zM354 224h1v2h-1zM355 224h1v2h-1zM356 218h1v1h-1zM358 218h1v1h-1zM358 224h1v2h-1zM359 218h1v1h-1zM359 224h1v2h-1zM360 218h1v1h-1zM361 218h1v1h-1zM361 224h1v2h-1zM362 218h1v1h-1zM363 218h1v1h-1zM364 218h1v1h-1zM365 218h1v1h-1zM365 224h1v2h-1zM366 218h1v1h-1zM369 218h1v1h-1zM370 218h1v1h-1zM371 218h1v1h-1zM371 224h1v2h-1zM372 218h1v1h-1zM373 218h1v1h-1zM374 218h1v1h-1zM375 218h1v1h-1zM377 218h1v1h-1zM378 218h1v1h-1zM378 224h1v2h-1zM379 218h1v1h-1zM379 224h1v2h-1zM380 218h1v1h-1zM380 224h1v2h-1zM381 224h1v2h-1zM382 218h1v1h-1zM383 218h1v1h-1zM383 224h1v2h-1zM384 218h1v1h-1zM384 224h1v2h-1zM385 218h1v1h-1zM388 218h1v1h-1zM388 224h1v2h-1zM389 224h1v2h-1zM390 218h1v1h-1zM391 224h1v2h-1zM392 224h1v2h-1zM393 218h1v1h-1zM393 224h1v2h-1zM394 218h1v1h-1zM394 224h1v2h-1zM396 218h1v1h-1zM396 224h1v2h-1zM398 218h1v1h-1zM399 218h1v1h-1zM400 228h1v1h-1zM401 228h1v1h-1zM401 229h1v2h-1zM402 228h1v1h-1zM403 228h1v1h-1zM404 228h1v1h-1zM405 228h1v1h-1zM406 228h1v1h-1zM408 228h1v1h-1zM409 228h1v1h-1zM411 228h1v1h-1zM411 229h1v2h-1zM412 228h1v1h-1zM413 228h1v1h-1zM414 228h1v1h-1zM415 228h1v1h-1zM415 229h1v2h-1zM416 228h1v1h-1zM418 228h1v1h-1zM420 218h1v1h-1zM420 224h1v2h-1zM421 224h1v2h-1zM422 218h1v1h-1zM422 224h1v2h-1zM423 218h1v1h-1zM423 224h1v2h-1zM424 224h1v2h-1zM425 218h1v1h-1zM425 224h1v2h-1zM427 218h1v1h-1zM427 224h1v2h-1zM428 218h1v1h-1zM429 224h1v2h-1zM430 218h1v1h-1zM430 224h1v2h-1zM431 218h1v1h-1zM432 218h1v1h-1zM432 224h1v2h-1zM433 218h1v1h-1zM433 224h1v2h-1zM434 218h1v1h-1zM435 224h1v2h-1zM436 218h1v1h-1zM437 218h1v1h-1zM438 218h1v1h-1zM440 218h1v1h-1zM441 218h1v1h-1zM441 224h1v2h-1zM442 218h1v1h-1zM442 224h1v2h-1zM443 218h1v1h-1zM443 224h1v2h-1zM444 218h1v1h-1zM444 224h1v2h-1zM445 218h1v1h-1zM445 224h1v2h-1zM446 218h1v1h-1zM446 224h1v2h-1zM447 218h1v1h-1zM448 218h1v1h-1zM448 224h1v2h-1zM450 218h1v1h-1zM450 224h1v2h-1zM452 218h1v1h-1zM452 224h1v2h-1zM453 218h1v1h-1zM454 218h1v1h-1zM455 218h1v1h-1zM455 224h1v2h-1zM456 218h1v1h-1zM456 215h1v3h-1zM456 224h1v2h-1zM457 218h1v1h-1zM457 224h1v2h-1zM458 218h1v1h-1zM459 218h1v1h-1zM460 218h1v1h-1zM461 224h1v2h-1zM462 218h1v1h-1zM462 224h1v2h-1zM463 218h1v1h-1zM463 224h1v2h-1zM464 218h1v1h-1zM464 224h1v2h-1zM465 218h1v1h-1zM465 224h1v2h-1zM467 218h1v1h-1zM467 224h1v2h-1zM468 224h1v2h-1zM469 218h1v1h-1zM470 218h1v1h-1zM471 218h1v1h-1zM471 224h1v2h-1zM472 218h1v1h-1zM472 224h1v2h-1zM473 218h1v1h-1zM474 218h1v1h-1zM475 218h1v1h-1zM475 224h1v2h-1zM476 218h1v1h-1zM476 215h1v3h-1zM476 224h1v2h-1zM477 218h1v1h-1zM478 218h1v1h-1zM479 218h1v1h-1zM479 224h1v2h-1zM480 224h1v2h-1zM481 218h1v1h-1zM481 224h1v2h-1zM482 218h1v1h-1zM484 218h1v1h-1zM484 224h1v2h-1zM486 218h1v1h-1zM488 218h1v1h-1zM488 224h1v2h-1zM490 218h1v1h-1zM490 224h1v2h-1zM491 224h1v2h-1zM492 218h1v1h-1zM492 215h1v3h-1zM493 218h1v1h-1zM494 218h1v1h-1zM494 224h1v2h-1zM495 218h1v1h-1zM495 224h1v2h-1zM496 218h1v1h-1zM496 224h1v2h-1zM497 224h1v2h-1zM498 218h1v1h-1zM499 218h1v1h-1zM500 218h1v1h-1zM501 218h1v1h-1zM502 218h1v1h-1zM502 215h1v3h-1zM502 224h1v2h-1zM503 218h1v1h-1zM503 224h1v2h-1zM504 218h1v1h-1zM505 218h1v1h-1zM506 218h1v1h-1zM506 224h1v2h-1zM507 218h1v1h-1zM507 224h1v2h-1zM508 218h1v1h-1zM509 224h1v2h-1zM510 218h1v1h-1zM510 224h1v2h-1zM511 218h1v1h-1zM511 224h1v2h-1zM512 218h1v1h-1zM513 218h1v1h-1zM513 224h1v2h-1zM514 218h1v1h-1zM515 218h1v1h-1zM515 224h1v2h-1zM517 218h1v1h-1zM517 224h1v2h-1zM519 218h1v1h-1zM520 218h1v1h-1zM521 218h1v1h-1zM522 218h1v1h-1zM523 224h1v2h-1zM525 224h1v2h-1zM527 218h1v1h-1zM528 218h1v1h-1zM529 218h1v1h-1zM529 215h1v3h-1zM529 224h1v2h-1zM530 218h1v1h-1zM530 224h1v2h-1zM531 218h1v1h-1zM531 224h1v2h-1zM532 218h1v1h-1zM532 224h1v2h-1zM533 218h1v1h-1zM535 218h1v1h-1zM536 224h1v2h-1zM538 218h1v1h-1zM539 218h1v1h-1zM540 218h1v1h-1zM540 224h1v2h-1zM541 218h1v1h-1zM542 218h1v1h-1zM543 218h1v1h-1zM543 224h1v2h-1zM544 218h1v1h-1zM545 218h1v1h-1zM546 218h1v1h-1zM547 218h1v1h-1zM548 218h1v1h-1zM549 218h1v1h-1zM549 224h1v2h-1zM550 218h1v1h-1zM550 224h1v2h-1zM551 218h1v1h-1zM553 218h1v1h-1zM554 218h1v1h-1zM555 218h1v1h-1zM556 218h1v1h-1zM556 224h1v2h-1zM557 218h1v1h-1zM558 224h1v2h-1zM559 218h1v1h-1zM559 224h1v2h-1zM560 218h1v1h-1zM561 224h1v2h-1zM563 218h1v1h-1zM563 224h1v2h-1zM565 218h1v1h-1zM565 224h1v2h-1zM566 218h1v1h-1zM566 224h1v2h-1zM567 218h1v1h-1zM568 218h1v1h-1zM568 224h1v2h-1zM569 218h1v1h-1zM569 224h1v2h-1zM570 224h1v2h-1zM571 218h1v1h-1zM571 224h1v2h-1zM572 218h1v1h-1zM572 224h1v2h-1zM573 218h1v1h-1zM574 218h1v1h-1zM575 218h1v1h-1zM575 224h1v2h-1zM577 218h1v1h-1zM577 224h1v2h-1zM578 218h1v1h-1zM579 215h1v3h-1zM580 218h1v1h-1zM581 218h1v1h-1zM581 224h1v2h-1zM582 218h1v1h-1zM583 218h1v1h-1zM584 218h1v1h-1zM586 218h1v1h-1zM587 271h1v1h-1zM588 277h1v2h-1zM589 271h1v1h-1zM589 277h1v2h-1zM590 271h1v1h-1zM590 277h1v2h-1zM591 271h1v1h-1zM592 271h1v1h-1zM592 277h1v2h-1zM593 268h1v3h-1zM593 277h1v2h-1zM595 271h1v1h-1zM596 271h1v1h-1zM598 271h1v1h-1zM601 271h1v1h-1zM601 277h1v2h-1zM602 271h1v1h-1zM602 277h1v2h-1zM603 271h1v1h-1zM604 277h1v2h-1zM606 218h1v1h-1zM606 224h1v2h-1zM607 218h1v1h-1zM607 224h1v2h-1zM608 218h1v1h-1zM608 224h1v2h-1zM609 218h1v1h-1zM609 224h1v2h-1zM610 218h1v1h-1zM610 224h1v2h-1zM611 218h1v1h-1zM612 218h1v1h-1zM613 218h1v1h-1zM613 224h1v2h-1zM615 218h1v1h-1zM616 218h1v1h-1zM617 218h1v1h-1zM617 224h1v2h-1zM618 218h1v1h-1zM619 218h1v1h-1zM619 224h1v2h-1zM620 218h1v1h-1zM620 224h1v2h-1zM621 218h1v1h-1zM621 224h1v2h-1zM622 218h1v1h-1zM623 218h1v1h-1zM624 218h1v1h-1zM624 224h1v2h-1zM625 224h1v2h-1zM627 218h1v1h-1zM628 215h1v3h-1zM629 218h1v1h-1zM630 218h1v1h-1zM630 224h1v2h-1zM631 218h1v1h-1zM631 224h1v2h-1zM632 218h1v1h-1zM633 218h1v1h-1zM634 218h1v1h-1zM634 224h1v2h-1zM635 218h1v1h-1zM635 224h1v2h-1zM637 218h1v1h-1zM637 224h1v2h-1zM639 218h1v1h-1zM639 224h1v2h-1zM640 224h1v2h-1zM641 218h1v1h-1zM642 218h1v1h-1zM643 218h1v1h-1zM644 224h1v2h-1zM646 218h1v1h-1zM647 218h1v1h-1zM647 224h1v2h-1zM648 218h1v1h-1zM648 224h1v2h-1zM650 218h1v1h-1zM650 215h1v3h-1zM651 218h1v1h-1zM651 224h1v2h-1zM652 218h1v1h-1zM653 218h1v1h-1zM654 218h1v1h-1zM654 224h1v2h-1zM655 224h1v2h-1zM656 218h1v1h-1zM656 224h1v2h-1zM658 218h1v1h-1zM658 215h1v3h-1zM658 224h1v2h-1zM659 224h1v2h-1zM660 218h1v1h-1zM661 224h1v2h-1zM662 224h1v2h-1zM663 218h1v1h-1zM663 224h1v2h-1zM664 218h1v1h-1zM664 224h1v2h-1zM665 218h1v1h-1zM666 218h1v1h-1zM666 224h1v2h-1zM668 218h1v1h-1zM669 218h1v1h-1zM669 224h1v2h-1zM670 218h1v1h-1zM670 224h1v2h-1zM671 224h1v2h-1zM672 218h1v1h-1zM673 218h1v1h-1zM674 218h1v1h-1zM674 224h1v2h-1zM675 218h1v1h-1zM676 218h1v1h-1zM677 218h1v1h-1zM678 224h1v2h-1zM679 218h1v1h-1zM679 224h1v2h-1zM681 224h1v2h-1zM682 218h1v1h-1zM682 224h1v2h-1zM684 218h1v1h-1zM684 224h1v2h-1zM685 218h1v1h-1zM685 224h1v2h-1zM686 218h1v1h-1zM687 218h1v1h-1zM687 224h1v2h-1zM689 218h1v1h-1zM690 218h1v1h-1zM690 224h1v2h-1zM691 218h1v1h-1zM692 218h1v1h-1zM692 224h1v2h-1zM693 218h1v1h-1zM694 224h1v2h-1zM695 224h1v2h-1zM696 218h1v1h-1zM697 218h1v1h-1zM697 215h1v3h-1zM698 218h1v1h-1zM699 218h1v1h-1zM700 218h1v1h-1zM700 215h1v3h-1zM700 224h1v2h-1zM701 218h1v1h-1zM702 218h1v1h-1zM702 224h1v2h-1zM703 218h1v1h-1zM704 218h1v1h-1zM705 218h1v1h-1zM705 224h1v2h-1zM706 218h1v1h-1zM706 224h1v2h-1zM707 218h1v1h-1zM707 224h1v2h-1zM708 224h1v2h-1zM709 218h1v1h-1zM710 218h1v1h-1zM711 218h1v1h-1zM712 218h1v1h-1zM713 218h1v1h-1zM713 224h1v2h-1zM714 218h1v1h-1zM714 224h1v2h-1zM715 218h1v1h-1zM715 224h1v2h-1zM716 224h1v2h-1zM717 224h1v2h-1zM718 218h1v1h-1zM719 218h1v1h-1zM720 218h1v1h-1zM720 224h1v2h-1zM721 218h1v1h-1zM721 224h1v2h-1zM722 218h1v1h-1zM723 218h1v1h-1zM723 224h1v2h-1zM724 218h1v1h-1zM725 224h1v2h-1zM727 218h1v1h-1zM728 224h1v2h-1zM729 218h1v1h-1zM729 224h1v2h-1zM730 218h1v1h-1zM731 218h1v1h-1zM732 218h1v1h-1zM732 224h1v2h-1zM733 218h1v1h-1zM733 224h1v2h-1zM734 218h1v1h-1zM735 218h1v1h-1zM735 224h1v2h-1zM736 218h1v1h-1zM736 224h1v2h-1zM737 218h1v1h-1zM740 218h1v1h-1zM740 215h1v3h-1zM740 224h1v2h-1zM741 218h1v1h-1zM741 224h1v2h-1zM742 224h1v2h-1zM743 218h1v1h-1zM744 218h1v1h-1zM744 224h1v2h-1zM745 218h1v1h-1zM746 218h1v1h-1zM746 224h1v2h-1zM747 218h1v1h-1zM747 224h1v2h-1zM748 224h1v2h-1zM749 218h1v1h-1zM750 218h1v1h-1zM751 215h1v3h-1zM751 224h1v2h-1zM752 218h1v1h-1zM753 218h1v1h-1zM753 224h1v2h-1zM755 218h1v1h-1zM755 224h1v2h-1zM756 218h1v1h-1zM756 224h1v2h-1zM758 218h1v1h-1zM758 224h1v2h-1zM759 224h1v2h-1zM760 218h1v1h-1zM760 224h1v2h-1zM761 218h1v1h-1zM764 218h1v1h-1zM766 218h1v1h-1zM768 224h1v2h-1zM769 218h1v1h-1zM769 224h1v2h-1zM770 218h1v1h-1zM772 218h1v1h-1zM773 218h1v1h-1zM773 224h1v2h-1z" fill="#00a0a0"/>
<path d="M25 221h1v7h-1zM26 221h1v7h-1zM27 221h1v7h-1zM28 221h1v7h-1zM29 221h1v7h-1zM30 221h1v7h-1zM31 221h1v7h-1zM32 221h1v7h-1zM33 221h1v7h-1zM34 221h1v7h-1zM35 221h1v7h-1zM36 221h1v7h-1zM37 221h1v7h-1zM38 221h1v7h-1zM39 221h1v7h-1zM40 221h1v7h-1zM41 221h1v7h-1zM42 221h1v7h-1zM43 221h1v7h-1zM44 219h1v5h-1zM45 219h1v5h-1zM46 219h1v5h-1zM47 219h1v5h-1zM48 219h1v5h-1zM49 219h1v5h-1zM50 219h1v5h-1zM51 219h1v5h-1zM52 219h1v5h-1zM53 219h1v5h-1zM54 219h1v5h-1zM55 219h1v5h-1zM56 219h1v5h-1zM57 219h1v5h-1zM58 219h1v5h-1zM59 219h1v5h-1zM60 219h1v5h-1zM61 219h1v5h-1zM62 219h1v5h-1zM63 219h1v5h-1zM64 219h1v5h-1zM65 219h1v5h-1zM66 219h1v5h-1zM67 219h1v5h-1zM68 219h1v5h-1zM69 219h1v5h-1zM70 219h1v5h-1zM71 219h1v5h-1zM72 219h1v5h-1zM73 219h1v5h-1zM74 219h1v5h-1zM75 219h1v5h-1zM76 219h1v5h-1zM77 219h1v5h-1zM78 219h1v5h-1zM79 219h1v5h-1zM80 219h1v5h-1zM81 219h1v5h-1zM82 219h1v5h-1zM83 219h1v5h-1zM84 219h1v5h-1zM85 219h1v5h-1zM86 219h1v5h-1zM87 219h1v5h-1zM88 219h1v5h-1zM89 219h1v5h-1zM90 219h1v5h-1zM91 219h1v5h-1zM92 219h1v5h-1zM93 219h1v5h-1zM94 219h1v5h-1zM95 219h1v5h-1zM96 219h1v5h-1zM97 219h1v5h-1zM98 219h1v5h-1zM99 219h1v5h-1zM100 219h1v5h-1zM101 219h1v5h-1zM102 219h1v5h-1zM103 219h1v5h-1zM104 219h1v5h-1zM105 219h1v5h-1zM106 219h1v5h-1zM107 219h1v5h-1zM108 219h1v5h-1zM109 219h1v5h-1zM110 219h1v5h-1zM111 219h1v5h-1zM112 219h1v5h-1zM113 219h1v5h-1zM114 219h1v5h-1zM115 219h1v5h-1zM116 219h1v5h-1zM117 219h1v5h-1zM118 219h1v5h-1zM119 219h1v5h-1zM120 219h1v5h-1zM121 219h1v5h-1zM122 219h1v5h-1zM123 219h1v5h-1zM124 219h1v5h-1zM125 219h1v5h-1zM126 219h1v5h-1zM127 219h1v5h-1zM128 219h1v5h-1zM129 219h1v5h-1zM130 219h1v5h-1zM131 219h1v5h-1zM132 219h1v5h-1zM133 219h1v5h-1zM134 219h1v5h-1zM135 219h1v5h-1zM136 219h1v5h-1zM137 219h1v5h-1zM138 219h1v5h-1zM139 219h1v5h-1zM140 219h1v5h-1zM141 219h1v5h-1zM142 219h1v5h-1zM143 219h1v5h-1zM144 219h1v5h-1zM145 219h1v5h-1zM146 219h1v5h-1zM147 219h1v5h-1zM148 219h1v5h-1zM149 219h1v5h-1zM150 219h1v5h-1zM151 219h1v5h-1zM152 219h1v5h-1zM153 219h1v5h-1zM154 219h1v5h-1zM155 219h1v5h-1zM156 219h1v5h-1zM157 219h1v5h-1zM158 219h1v5h-1zM159 219h1v5h-1zM160 219h1v5h-1zM161 219h1v5h-1zM162 219h1v5h-1zM163 219h1v5h-1zM164 219h1v5h-1zM165 219h1v5h-1zM166 219h1v5h-1zM167 219h1v5h-1zM168 219h1v5h-1zM169 219h1v5h-1zM170 219h1v5h-1zM171 219h1v5h-1zM172 219h1v5h-1zM173 219h1v5h-1zM174 219h1v5h-1zM175 219h1v5h-1zM176 219h1v5h-1zM177 219h1v5h-1zM178 219h1v5h-1zM179 219h1v5h-1zM180 219h1v5h-1zM181 219h1v5h-1zM182 219h1v5h-1zM183 219h1v5h-1zM184 219h1v5h-1zM185 219h1v5h-1zM186 219h1v5h-1zM187 219h1v5h-1zM188 219h1v5h-1zM189 219h1v5h-1zM190 219h1v5h-1zM191 219h1v5h-1zM192 219h1v5h-1zM193 219h1v5h-1zM194 219h1v5h-1zM195 219h1v5h-1zM196 219h1v5h-1zM197 219h1v5h-1zM198 219h1v5h-1zM199 219h1v5h-1zM200 219h1v5h-1zM201 219h1v5h-1zM202 219h1v5h-1zM203 219h1v5h-1zM204 219h1v5h-1zM205 219h1v5h-1zM206 219h1v5h-1zM207 219h1v5h-1zM208 219h1v5h-1zM209 219h1v5h-1zM210 219h1v5h-1zM211 219h1v5h-1zM212 272h1v5h-1zM213 272h1v5h-1zM214 272h1v5h-1zM215 272h1v5h-1zM216 272h1v5h-1zM217 272h1v5h-1zM218 272h1v5h-1zM219 272h1v5h-1zM220 272h1v5h-1zM221 272h1v5h-1zM222 272h1v5h-1zM223 272h1v5h-1zM224 272h1v5h-1zM225 272h1v5h-1zM226 272h1v5h-1zM227 272h1v5h-1zM228 272h1v5h-1zM229 272h1v5h-1zM230 272h1v5h-1zM231 272h1v5h-1zM232 272h1v5h-1zM233 272h1v5h-1zM234 272h1v5h-1zM235 272h1v5h-1zM236 272h1v5h-1zM237 272h1v5h-1zM238 272h1v5h-1zM239 272h1v5h-1zM240 272h1v5h-1zM241 272h1v5h-1zM242 272h1v5h-1zM243 272h1v5h-1zM244 272h1v5h-1zM245 272h1v5h-1zM246 272h1v5h-1zM247 272h1v5h-1zM248 272h1v5h-1zM249 272h1v5h-1zM250 272h1v5h-1zM251 272h1v5h-1zM252 272h1v5h-1zM253 272h1v5h-1zM254 272h1v5h-1zM255 272h1v5h-1zM256 272h1v5h-1zM257 272h1v5h-1zM258 272h1v5h-1zM259 272h1v5h-1zM260 272h1v5h-1zM261 272h1v5h-1zM262 272h1v5h-1zM263 272h1v5h-1zM264 272h1v5h-1zM265 272h1v5h-1zM266 272h1v5h-1zM267 272h1v5h-1zM268 272h1v5h-1zM269 272h1v5h-1zM270 272h1v5h-1zM271 272h1v5h-1zM272 272h1v5h-1zM273 272h1v5h-1zM274 272h1v5h-1zM275 272h1v5h-1zM276 272h1v5h-1zM277 272h1v5h-1zM278 272h1v5h-1zM279 272h1v5h-1zM280 272h1v5h-1zM281 272h1v5h-1zM282 272h1v5h-1zM283 272h1v5h-1zM284 272h1v5h-1zM285 272h1v5h-1zM286 272h1v5h-1zM287 272h1v5h-1zM288 272h1v5h-1zM289 272h1v5h-1zM290 272h1v5h-1zM291 272h1v5h-1zM292 272h1v5h-1zM293 272h1v5h-1zM294 272h1v5h-1zM295 272h1v5h-1zM296 272h1v5h-1zM297 272h1v5h-1zM298 272h1v5h-1zM299 272h1v5h-1zM300 272h1v5h-1zM301 272h1v5h-1zM302 272h1v5h-1zM303 272h1v5h-1zM304 272h1v5h-1zM305 272h1v5h-1zM306 219h1v5h-1zM307 219h1v5h-1zM308 219h1v5h-1zM309 219h1v5h-1zM310 219h1v5h-1zM311 219h1v5h-1zM312 219h1v5h-1zM313 219h1v5h-1zM314 219h1v5h-1zM315 219h1v5h-1zM316 219h1v5h-1zM317 219h1v5h-1zM318 219h1v5h-1zM319 219h1v5h-1zM320 219h1v5h-1zM321 219h1v5h-1zM322 219h1v5h-1zM323 219h1v5h-1zM324 219h1v5h-1zM325 219h1v5h-1zM326 219h1v5h-1zM327 219h1v5h-1zM328 219h1v5h-1zM329 219h1v5h-1zM330 219h1v5h-1zM331 219h1v5h-1zM332 219h1v5h-1zM333 219h1v5h-1zM334 219h1v5h-1zM335 219h1v5h-1zM336 219h1v5h-1zM337 219h1v5h-1zM338 219h1v5h-1zM339 219h1v5h-1zM340 219h1v5h-1zM341 219h1v5h-1zM342 219h1v5h-1zM343 219h1v5h-1zM344 219h1v5h-1zM345 219h1v5h-1zM346 219h1v5h-1zM347 219h1v5h-1zM348 219h1v5h-1zM349 219h1v5h-1zM350 219h1v5h-1zM351 219h1v5h-1zM352 219h1v5h-1zM353 219h1v5h-1zM354 219h1v5h-1zM355 219h1v5h-1zM356 219h1v5h-1zM357 219h1v5h-1zM358 219h1v5h-1zM359 219h1v5h-1zM360 219h1v5h-1zM361 219h1v5h-1zM362 219h1v5h-1zM363 219h1v5h-1zM364 219h1v5h-1zM365 219h1v5h-1zM366 219h1v5h-1zM367 219h1v5h-1zM368 219h1v5h-1zM369 219h1v5h-1zM370 219h1v5h-1zM371 219h1v5h-1zM372 219h1v5h-1zM373 219h1v5h-1zM374 219h1v5h-1zM375 219h1v5h-1zM376 219h1v5h-1zM377 219h1v5h-1zM378 219h1v5h-1zM379 219h1v5h-1zM380 219h1v5h-1zM381 219h1v5h-1zM382 219h1v5h-1zM383 219h1v5h-1zM384 219h1v5h-1zM385 219h1v5h-1zM386 219h1v5h-1zM387 219h1v5h-1zM388 219h1v5h-1zM389 219h1v5h-1zM390 219h1v5h-1zM391 219h1v5h-1zM392 219h1v5h-1zM393 219h1v5h-1zM394 219h1v5h-1zM395 219h1v5h-1zM396 219h1v5h-1zM397 219h1v5h-1zM398 219h1v5h-1zM399 219h1v5h-1zM400 221h1v7h-1zM401 221h1v7h-1zM402 221h1v7h-1zM403 221h1v7h-1zM404 221h1v7h-1zM405 221h1v7h-1zM406 221h1v7h-1zM407 221h1v7h-1zM408 221h1v7h-1zM409 221h1v7h-1zM410 221h1v7h-1zM411 221h1v7h-1zM412 221h1v7h-1zM413 221h1v7h-1zM414 221h1v7h-1zM415 221h1v7h-1zM416 221h1v7h-1zM417 221h1v7h-1zM418 221h1v7h-1zM419 221h1v7h-1zM420 219h1v5h-1zM421 219h1v5h-1zM422 219h1v5h-1zM423 219h1v5h-1zM424 219h1v5h-1zM425 219h1v5h-1zM426 219h1v5h-1zM427 219h1v5h-1zM428 219h1v5h-1zM429 219h1v5h-1zM430 219h1v5h-1zM431 219h1v5h-1zM432 219h1v5h-1zM433 219h1v5h-1zM434 219h1v5h-1zM435 219h1v5h-1zM436 219h1v5h-1zM437 219h1v5h-1zM438 219h1v5h-1zM439 219h1v5h-1zM440 219h1v5h-1zM441 219h1v5h-1zM442 219h1v5h-1zM443 219h1v5h-1zM444 219h1v5h-1zM445 219h1v5h-1zM446 219h1v5h-1zM447 219h1v5h-1zM448 219h1v5h-1zM449 219h1v5h-1zM450 219h1v5h-1zM451 219h1v5h-1zM452 219h1v5h-1zM453 219h1v5h-1zM454 219h1v5h-1zM455 219h1v5h-1zM456 219h1v5h-1zM457 219h1v5h-1zM458 219h1v5h-1zM459 219h1v5h-1zM460 219h1v5h-1zM461 219h1v5h-1zM462 219h1v5h-1zM463 219h1v5h-1zM464 219h1v5h-1zM465 219h1v5h-1zM466 219h1v5h-1zM467 219h1v5h-1zM468 219h1v5h-1zM469 219h1v5h-1zM470 219h1v5h-1zM471 219h1v5h-1zM472 219h1v5h-1zM473 219h1v5h-1zM474 219h1v5h-1zM475 219h1v5h-1zM476 219h1v5h-1zM477 219h1v5h-1zM478 219h1v5h-1zM479 219h1v5h-1zM480 219h1v5h-1zM481 219h1v5h-1zM482 219h1v5h-1zM483 219h1v5h-1zM484 219h1v5h-1zM485 219h1v5h-1zM486 219h1v5h-1zM487 219h1v5h-1zM488 219h1v5h-1zM489 219h1v5h-1zM490 219h1v5h-1zM491 219h1v5h-1zM492 219h1v5h-1zM493 219h1v5h-1zM494 219h1v5h-1zM495 219h1v5h-1zM496 219h1v5h-1zM497 219h1v5h-1zM498 219h1v5h-1zM499 219h1v5h-1zM500 219h1v5h-1zM501 219h1v5h-1zM502 219h1v5h-1zM503 219h1v5h-1zM504 219h1v5h-1zM505 219h1v5h-1zM506 219h1v5h-1zM507 219h1v5h-1zM508 219h1v5h-1zM509 219h1v5h-1zM510 219h1v5h-1zM511 219h1v5h-1zM512 219h1v5h-1zM513 219h1v5h-1zM514 219h1v5h-1zM515 219h1v5h-1zM516 219h1v5h-1zM517 219h1v5h-1zM518 219h1v5h-1zM519 219h1v5h-1zM520 219h1v5h-1zM521 219h1v5h-1zM522 219h1v5h-1zM523 219h1v5h-1zM524 219h1v5h-1zM525 219h1v5h-1zM526 219h1v5h-1zM527 219h1v5h-1zM528 219h1v5h-1zM529 219h1v5h-1zM530 219h1v5h-1zM531 219h1v5h-1zM532 219h1v5h-1zM533 219h1v5h-1zM534 219h1v5h-1zM535 219h1v5h-1zM536 219h1v5h-1zM537 219h1v5h-1zM538 219h1v5h-1zM539 219h1v5h-1zM540 219h1v5h-1zM541 219h1v5h-1zM542 219h1v5h-1zM543 219h1v5h-1zM544 219h1v5h-1zM545 219h1v5h-1zM546 219h1v5h-1zM547 219h1v5h-1zM548 219h1v5h-1zM549 219h1v5h-1zM550 219h1v5h-1zM551 219h1v5h-1zM552 219h1v5h-1zM553 219h1v5h-1zM554 219h1v5h-1zM555 219h1v5h-1zM556 219h1v5h-1zM557 219h1v5h-1zM558 219h1v5h-1zM559 219h1v5h-1zM560 219h1v5h-1zM561 219h1v5h-1zM562 219h1v5h-1zM563 219h1v5h-1zM564 219h1v5h-1zM565 219h1v5h-1zM566 219h1v5h-1zM567 219h1v5h-1zM568 219h1v5h-1zM569 219h1v5h-1zM570 219h1v5h-1zM571 219h1v5h-1zM572 219h1v5h-1zM573 219h1v5h-1zM574 219h1v5h-1zM575 219h1v5h-1zM576 219h1v5h-1zM577 219h1v5h-1zM578 219h1v5h-1zM579 219h1v5h-1zM580 219h1v5h-1zM581 219h1v5h-1zM582 219h1v5h-1zM583 219h1v5h-1zM584 219h1v5h-1zM585 219h1v5h-1zM586 219h1v5h-1zM587 272h1v5h-1zM588 272h1v5h-1zM589 272h1v5h-1zM590 272h1v5h-1zM591 272h1v5h-1zM592 272h1v5h-1zM593 272h1v5h-1zM594 272h1v5h-1zM595 272h1v5h-1zM596 272h1v5h-1zM597 272h1v5h-1zM598 272h1v5h-1zM599 272h1v5h-1zM600 272h1v5h-1zM601 272h1v5h-1zM602 272h1v5h-1zM603 272h1v5h-1zM604 272h1v5h-1zM605 272h1v5h-1zM606 219h1v5h-1zM607 219h1v5h-1zM608 219h1v5h-1zM609 219h1v5h-1zM610 219h1v5h-1zM611 219h1v5h-1zM612 219h1v5h-1zM613 219h1v5h-1zM614 219h1v5h-1zM615 219h1v5h-1zM616 219h1v5h-1zM617 219h1v5h-1zM618 219h1v5h-1zM619 219h1v5h-1zM620 219h1v5h-1zM621 219h1v5h-1zM622 219h1v5h-1zM623 219h1v5h-1zM624 219h1v5h-1zM625 219h1v5h-1zM626 219h1v5h-1zM627 219h1v5h-1zM628 219h1v5h-1zM629 219h1v5h-1zM630 219h1v5h-1zM631 219h1v5h-1zM632 219h1v5h-1zM633 219h1v5h-1zM634 219h1v5h-1zM635 219h1v5h-1zM636 219h1v5h-1zM637 219h1v5h-1zM638 219h1v5h-1zM639 219h1v5h-1zM640 219h1v5h-1zM641 219h1v5h-1zM642 219h1v5h-1zM643 219h1v5h-1zM644 219h1v5h-1zM645 219h1v5h-1zM646 219h1v5h-1zM647 219h1v5h-1zM648 219h1v5h-1zM649 219h1v5h-1zM650 219h1v5h-1zM651 219h1v5h-1zM652 219h1v5h-1zM653 219h1v5h-1zM654 219h1v5h-1zM655 219h1v5h-1zM656 219h1v5h-1zM657 219h1v5h-1zM658 219h1v5h-1zM659 219h1v5h-1zM660 219h1v5h-1zM661 219h1v5h-1zM662 219h1v5h-1zM663 219h1v5h-1zM664 219h1v5h-1zM665 219h1v5h-1zM666 219h1v5h-1zM667 219h1v5h-1zM668 219h1v5h-1zM669 219h1v5h-1zM670 219h1v5h-1zM671 219h1v5h-1zM672 219h1v5h-1zM673 219h1v5h-1zM674 219h1v5h-1zM675 219h1v5h-1zM676 219h1v5h-1zM677 219h1v5h-1zM678 219h1v5h-1zM679 219h1v5h-1zM680 219h1v5h-1zM681 219h1v5h-1zM682 219h1v5h-1zM683 219h1v5h-1zM684 219h1v5h-1zM685 219h1v5h-1zM686 219h1v5h-1zM687 219h1v5h-1zM688 219h1v5h-1zM689 219h1v5h-1zM690 219h1v5h-1zM691 219h1v5h-1zM692 219h1v5h-1zM693 219h1v5h-1zM694 219h1v5h-1zM695 219h1v5h-1zM696 219h1v5h-1zM697 219h1v5h-1zM698 219h1v5h-1zM699 219h1v5h-1zM700 219h1v5h-1zM701 219h1v5h-1zM702 219h1v5h-1zM703 219h1v5h-1zM704 219h1v5h-1zM705 219h1v5h-1zM706 219h1v5h-1zM707 219h1v5h-1zM708 219h1v5h-1zM709 219h1v5h-1zM710 219h1v5h-1zM711 219h1v5h-1zM712 219h1v5h-1zM713 219h1v5h-1zM714 219h1v5h-1zM715 219h1v5h-1zM716 219h1v5h-1zM717 219h1v5h-1zM718 219h1v5h-1zM719 219h1v5h-1zM720 219h1v5h-1zM721 219h1v5h-1zM722 219h1v5h-1zM723 219h1v5h-1zM724 219h1v5h-1zM725 219h1v5h-1zM726 219h1v5h-1zM727 219h1v5h-1zM728 219h1v5h-1zM729 219h1v5h-1zM730 219h1v5h-1zM731 219h1v5h-1zM732 219h1v5h-1zM733 219h1v5h-1zM734 219h1v5h-1zM735 219h1v5h-1zM736 219h1v5h-1zM737 219h1v5h-1zM738 219h1v5h-1zM739 219h1v5h-1zM740 219h1v5h-1zM741 219h1v5h-1zM742 219h1v5h-1zM743 219h1v5h-1zM744 219h1v5h-1zM745 219h1v5h-1zM746 219h1v5h-1zM747 219h1v5h-1zM748 219h1v5h-1zM749 219h1v5h-1zM750 219h1v5h-1zM751 219h1v5h-1zM752 219h1v5h-1zM753 219h1v5h-1zM754 219h1v5h-1zM755 219h1v5h-1zM756 219h1v5h-1zM757 219h1v5h-1zM758 219h1v5h-1zM759 219h1v5h-1zM760 219h1v5h-1zM761 219h1v5h-1zM762 219h1v5h-1zM763 219h1v5h-1zM764 219h1v5h-1zM765 219h1v5h-1zM766 219h1v5h-1zM767 219h1v5h-1zM768 219h1v5h-1zM769 219h1v5h-1zM770 219h1v5h-1zM771 219h1v5h-1zM772 219h1v5h-1zM773 219h1v5h-1zM212 220h1v53h-1zM306 220h1v53h-1zM587 220h1v53h-1zM606 220h1v53h-1z" fill="#00ffff"/>
<rect x="27" y="221" width="16" height="1" fill="#e8ffff" />
<rect x="27" y="222" width="16" height="1" fill="#000" />
<rect x="402" y="221" width="17" height="1" fill="#e8ffff" />
<rect x="402" y="222" width="17" height="1" fill="#000" />
<path d="M25 206.5H774" stroke="#00ffff" stroke-width="1" stroke-dasharray="4 4" fill="none"/>
<rect x="25" y="220" width="749" height="1" fill="#00ffff" />
<rect x="211" y="40" width="1" height="479" fill="#00ffff" />
<rect x="586" y="40" width="1" height="479" fill="#00ffff" />
<rect x="201.5" y="196.5" width="19" height="19" fill="none" stroke="#00ffff" stroke-width="1"/>
<circle cx="586.5" cy="220.5" r="9" fill="none" stroke="#00ffff" stroke-width="1.3" shape-rendering="geometricPrecision"/>
<path d="M391.5 40H407.5L399.5 48.5z" fill="#ffcc00" shape-rendering="geometricPrecision"/>
<path d="M774 143.5V157.5L767 150.5z" fill="#ffcc00" shape-rendering="geometricPrecision"/>
<path d="M3.5 273.5H19.5L22.5 279.5L19.5 285.5H3.5z" fill="#00ffff" stroke="#000" stroke-width="1" shape-rendering="geometricPrecision"/>
<text transform="translate(8 283.6) scale(1 1.0)" fill="#000" font-family="'Liberation Mono', monospace" font-size="13px" font-weight="bold" letter-spacing="0.20" text-anchor="start" xml:space="preserve" >2</text>
<rect x="25" y="207" width="10" height="13" rx="3" fill="#ff3300" shape-rendering="geometricPrecision"/>
<text transform="translate(26 218.0) scale(1 1.0)" fill="#000" font-family="'Liberation Mono', monospace" font-size="13px" font-weight="bold" letter-spacing="0.20" text-anchor="start" xml:space="preserve" >2</text>
<rect x="36.5" y="52.5" width="231" height="65" rx="4" ry="4" fill="none" stroke="#fff" stroke-width="1" shape-rendering="geometricPrecision"/>
<rect x="41.5" y="60.5" width="9" height="9" fill="none" stroke="#fff"/>
<circle cx="46.5" cy="84.5" r="5.2" fill="none" stroke="#fff" stroke-width="1.25" shape-rendering="geometricPrecision"/>
<path d="M56.7 107.6L62 98.8L67.3 107.6z" fill="none" stroke="#fff" stroke-width="1.35" shape-rendering="geometricPrecision"/>
<path d="M148.7 107.6L153.7 98.8L158.7 107.6z" fill="none" stroke="#fff" stroke-width="1.35" shape-rendering="geometricPrecision"/>
<text transform="translate(69 67.6) scale(1 1.04)" fill="#fff" font-family="'Liberation Mono', monospace" font-size="14.5px" font-weight="bold" letter-spacing="-0.70" text-anchor="start" xml:space="preserve" >-500us</text>
<text transform="translate(69 87.6) scale(1 1.04)" fill="#fff" font-family="'Liberation Mono', monospace" font-size="14.5px" font-weight="bold" letter-spacing="-0.70" text-anchor="start" xml:space="preserve" >500us</text>
<text transform="translate(69 107.6) scale(1 1.04)" fill="#fff" font-family="'Liberation Mono', monospace" font-size="14.5px" font-weight="bold" letter-spacing="-0.70" text-anchor="start" xml:space="preserve" >1.00ms</text>
<ellipse cx="153.2" cy="64.5" rx="5.4" ry="5.7" fill="#ff3300" shape-rendering="geometricPrecision"/>
<text transform="translate(149.2 68.1) scale(1 1.04)" fill="#fff" font-family="'Liberation Mono', monospace" font-size="12px" font-weight="normal" letter-spacing="0.80" text-anchor="start" xml:space="preserve" >1</text>
<ellipse cx="153.2" cy="84.5" rx="5.4" ry="5.7" fill="#ff3300" shape-rendering="geometricPrecision"/>
<text transform="translate(149.2 88.1) scale(1 1.04)" fill="#fff" font-family="'Liberation Mono', monospace" font-size="12px" font-weight="normal" letter-spacing="0.80" text-anchor="start" xml:space="preserve" >2</text>
<text transform="translate(161 67.6) scale(1 1.04)" fill="#fff" font-family="'Liberation Mono', monospace" font-size="14.5px" font-weight="bold" letter-spacing="-0.70" text-anchor="start" xml:space="preserve" >6.08V</text>
<text transform="translate(161 87.6) scale(1 1.04)" fill="#fff" font-family="'Liberation Mono', monospace" font-size="14.5px" font-weight="bold" letter-spacing="-0.70" text-anchor="start" xml:space="preserve" >4.91V</text>
<text transform="translate(161 107.6) scale(1 1.04)" fill="#fff" font-family="'Liberation Mono', monospace" font-size="14.5px" font-weight="bold" letter-spacing="-0.70" text-anchor="start" xml:space="preserve" >1.16V</text>
<text fill="#fff" stroke="#fff" font-family="'Liberation Sans', sans-serif" font-weight="bold"><tspan x="23.5" y="21.6" font-size="17.5px" stroke-width="0.7" textLength="12.5" lengthAdjust="spacingAndGlyphs">G</tspan><tspan x="37" y="17.6" font-size="12px" stroke-width="0.5" textLength="13" lengthAdjust="spacingAndGlyphs">W</tspan><tspan x="53.5" y="21.6" font-size="17.5px" stroke-width="0.7" textLength="59.5" lengthAdjust="spacingAndGlyphs">INSTEK</tspan></text>
<rect x="37" y="19" width="13" height="3" fill="#e06a00" />
<rect x="249" y="7" width="300" height="26" fill="#fff" />
<rect x="250" y="8" width="298" height="24" fill="#000" />
<polyline points="299.0,17.65 299.5,17.60 300.0,17.62 300.5,17.71 301.0,17.86 301.5,18.07 302.0,18.33 302.5,18.66 303.0,19.02 303.5,19.43 304.0,19.87 304.5,20.34 305.0,20.82 305.5,21.32 306.0,21.81 306.5,22.29 307.0,22.76 307.5,23.20 308.0,23.60 308.5,23.97 309.0,24.29 309.5,24.55 310.0,24.76 310.5,24.90 311.0,24.98 311.5,25.00 312.0,24.95 312.5,24.83 313.0,24.65 313.5,24.41 314.0,24.12 314.5,23.78 315.0,23.39 315.5,22.96 316.0,22.51 316.5,22.03 317.0,21.54 317.5,21.05 318.0,20.56 318.5,20.09 319.0,19.63 319.5,19.21 320.0,18.82 320.5,18.48 321.0,18.18 321.5,17.94 322.0,17.77 322.5,17.65 323.0,17.60 323.5,17.62 324.0,17.70 324.5,17.84 325.0,18.05 325.5,18.32 326.0,18.63 326.5,19.00 327.0,19.41 327.5,19.85 328.0,20.31 328.5,20.80 329.0,21.29 329.5,21.78 330.0,22.26 330.5,22.73 331.0,23.17 331.5,23.58 332.0,23.95 332.5,24.27 333.0,24.54 333.5,24.75 334.0,24.89 334.5,24.98 335.0,25.00 335.5,24.95 336.0,24.84 336.5,24.67 337.0,24.43 337.5,24.14 338.0,23.80 338.5,23.41 339.0,22.99 339.5,22.54 340.0,22.06 340.5,21.57 341.0,21.08 341.5,20.59 342.0,20.11 342.5,19.66 343.0,19.23 343.5,18.84 344.0,18.49 344.5,18.20 345.0,17.96 345.5,17.78 346.0,17.66 346.5,17.60 347.0,17.62 347.5,17.69 348.0,17.83 348.5,18.04 349.0,18.30 349.5,18.61 350.0,18.98 350.5,19.38 351.0,19.82 351.5,20.28 352.0,20.77 352.5,21.26 353.0,21.75 353.5,22.24 354.0,22.70 354.5,23.15 355.0,23.56 355.5,23.93 356.0,24.25 356.5,24.52 357.0,24.74 357.5,24.89 358.0,24.98 358.5,25.00 359.0,24.96 359.5,24.85 360.0,24.68 360.5,24.45 361.0,24.16 361.5,23.82 362.0,23.44 362.5,23.02 363.0,22.57 363.5,22.09 364.0,21.60 364.5,21.11 365.0,20.62 365.5,20.14 366.0,19.68 366.5,19.26 367.0,18.86 367.5,18.51 368.0,18.21 368.5,17.97 369.0,17.79 369.5,17.66 370.0,17.60 370.5,17.61 371.0,17.69 371.5,17.82 372.0,18.02 372.5,18.28 373.0,18.59 373.5,18.95 374.0,19.36 374.5,19.79 375.0,20.25 375.5,20.74 376.0,21.23 376.5,21.72 377.0,22.21 377.5,22.68 378.0,23.12 378.5,23.53 379.0,23.91 379.5,24.23 380.0,24.51 380.5,24.72 381.0,24.88 381.5,24.97 382.0,25.00 382.5,24.96 383.0,24.86 383.5,24.69 384.0,24.46 384.5,24.18 385.0,23.84 385.5,23.46 386.0,23.04 386.5,22.59 387.0,22.12 387.5,21.63 388.0,21.14 388.5,20.65 389.0,20.17 389.5,19.71 390.0,19.28 390.5,18.89 391.0,18.53 391.5,18.23 392.0,17.98 392.5,17.79 393.0,17.67 393.5,17.61 394.0,17.61 394.5,17.68 395.0,17.81 395.5,18.01 396.0,18.26 396.5,18.57 397.0,18.93 397.5,19.33 398.0,19.76 398.5,20.23 399.0,20.71 399.5,21.20 400.0,21.69 400.5,22.18 401.0,22.65 401.5,23.10 402.0,23.51 402.5,23.89 403.0,24.21 403.5,24.49 404.0,24.71 404.5,24.87 405.0,24.97 405.5,25.00 406.0,24.97 406.5,24.86 407.0,24.70 407.5,24.48 408.0,24.20 408.5,23.86 409.0,23.49 409.5,23.07 410.0,22.62 410.5,22.15 411.0,21.66 411.5,21.17 412.0,20.68 412.5,20.20 413.0,19.74 413.5,19.31 414.0,18.91 414.5,18.55 415.0,18.25 415.5,18.00 416.0,17.80 416.5,17.67 417.0,17.61 417.5,17.61 418.0,17.67 418.5,17.80 419.0,18.00 419.5,18.25 420.0,18.55 420.5,18.91 421.0,19.31 421.5,19.74 422.0,20.20 422.5,20.68 423.0,21.17 423.5,21.66 424.0,22.15 424.5,22.62 425.0,23.07 425.5,23.49 426.0,23.86 426.5,24.20 427.0,24.48 427.5,24.70 428.0,24.86 428.5,24.97 429.0,25.00 429.5,24.97 430.0,24.87 430.5,24.71 431.0,24.49 431.5,24.21 432.0,23.89 432.5,23.51 433.0,23.10 433.5,22.65 434.0,22.18 434.5,21.69 435.0,21.20 435.5,20.71 436.0,20.23 436.5,19.76 437.0,19.33 437.5,18.93 438.0,18.57 438.5,18.26 439.0,18.01 439.5,17.81 440.0,17.68 440.5,17.61 441.0,17.61 441.5,17.67 442.0,17.79 442.5,17.98 443.0,18.23 443.5,18.53 444.0,18.89 444.5,19.28 445.0,19.71 445.5,20.17 446.0,20.65 446.5,21.14 447.0,21.63 447.5,22.12 448.0,22.59 448.5,23.04 449.0,23.46 449.5,23.84 450.0,24.18 450.5,24.46 451.0,24.69 451.5,24.86 452.0,24.96 452.5,25.00 453.0,24.97 453.5,24.88 454.0,24.72 454.5,24.51 455.0,24.23 455.5,23.91 456.0,23.53 456.5,23.12 457.0,22.68 457.5,22.21 458.0,21.72 458.5,21.23 459.0,20.74 459.5,20.25 460.0,19.79 460.5,19.36 461.0,18.95 461.5,18.59 462.0,18.28 462.5,18.02 463.0,17.82 463.5,17.69 464.0,17.61 464.5,17.60 465.0,17.66 465.5,17.79 466.0,17.97 466.5,18.21 467.0,18.51 467.5,18.86 468.0,19.26 468.5,19.68 469.0,20.14 469.5,20.62 470.0,21.11 470.5,21.60 471.0,22.09 471.5,22.57 472.0,23.02 472.5,23.44 473.0,23.82 473.5,24.16 474.0,24.45 474.5,24.68 475.0,24.85 475.5,24.96 476.0,25.00 476.5,24.98 477.0,24.89 477.5,24.74 478.0,24.52 478.5,24.25 479.0,23.93 479.5,23.56 480.0,23.15 480.5,22.70 481.0,22.24 481.5,21.75 482.0,21.26 482.5,20.77 483.0,20.28 483.5,19.82 484.0,19.38 484.5,18.98 485.0,18.61 485.5,18.30 486.0,18.04 486.5,17.83 487.0,17.69 487.5,17.62 488.0,17.60 488.5,17.66 489.0,17.78 489.5,17.96 490.0,18.20 490.5,18.49 491.0,18.84 491.5,19.23 492.0,19.66 492.5,20.11 493.0,20.59 493.5,21.08 494.0,21.57 494.5,22.06 495.0,22.54 495.5,22.99 496.0,23.41 496.5,23.80 497.0,24.14 497.5,24.43 498.0,24.67 498.5,24.84 499.0,24.95" fill="none" stroke="#f4cc00" stroke-width="1.2" shape-rendering="geometricPrecision"/>
<rect x="320" y="11" width="159" height="18" fill="none" stroke="#cc6600" stroke-width="2"/>
<path d="M396.8 8H402.2L399.5 14.2z" fill="#00ffff" shape-rendering="geometricPrecision"/>
<rect x="558.5" y="7.5" width="49" height="25" rx="4" ry="4" fill="#004080" stroke="#f00018" stroke-width="1" shape-rendering="geometricPrecision"/>
<text x="566.3" y="23.8" fill="#ff0a14" font-family="'Liberation Sans', sans-serif" font-weight="bold" font-size="15.2px" textLength="32" lengthAdjust="spacingAndGlyphs">Stop</text>
<rect x="617.5" y="7.5" width="37" height="25" rx="4" ry="4" fill="#004080" stroke="#66ff99" stroke-width="1" shape-rendering="geometricPrecision"/>
<path d="M624 25h5v2h-5zM627 14h2v13h-2zM642 14h2v13h-2zM642 25h5v2h-5zM627 14h1v2h-1zM628 13h1v2h-1zM629 13h1v2h-1zM630 14h1v2h-1zM631 14h1v2h-1zM632 13h1v2h-1zM633 13h1v2h-1zM634 14h1v2h-1zM635 14h1v2h-1zM636 13h1v2h-1zM637 13h1v2h-1zM638 14h1v2h-1zM639 14h1v2h-1zM640 13h1v2h-1zM641 13h1v2h-1zM642 14h1v2h-1zM643 14h1v2h-1z" fill="#66ff99"/>
<rect x="669.5" y="2.5" width="105" height="35" rx="4" ry="4" fill="#000" stroke="#fff" stroke-width="1" shape-rendering="geometricPrecision"/>
<text transform="translate(677 15.6) scale(1 1.04)" fill="#fff" font-family="'Liberation Mono', monospace" font-size="14.5px" font-weight="bold" letter-spacing="-0.70" text-anchor="start" xml:space="preserve" >04 Jan 2020</text>
<text transform="translate(696.4 31.6) scale(1 1.04)" fill="#fff" font-family="'Liberation Mono', monospace" font-size="14.5px" font-weight="bold" letter-spacing="-0.70" text-anchor="start" xml:space="preserve" x="0.0 8.0 17.2 26.4 34.4 43.6 52.8 60.8">21:29:51</text>
<rect x="1.5" y="521.5" width="419" height="19" rx="4" ry="4" fill="#000" stroke="#fff" stroke-width="1" shape-rendering="geometricPrecision"/>
<ellipse cx="10" cy="531.5" rx="7" ry="7.5" fill="#ffcc00" shape-rendering="geometricPrecision"/>
<text x="10" y="537.5" fill="#000" font-family="'Liberation Sans', sans-serif" font-weight="bold" font-size="16px" text-anchor="middle" textLength="7.5" lengthAdjust="spacingAndGlyphs">1</text>
<rect x="30" y="528" width="14" height="2" fill="#ffcc00" />
<rect x="30" y="531" width="4" height="2" fill="#ffcc00" />
<rect x="35" y="531" width="4" height="2" fill="#ffcc00" />
<rect x="40" y="531" width="4" height="2" fill="#ffcc00" />
<text transform="translate(65.5 534.6) scale(1 1.04)" fill="#ffcc00" font-family="'Liberation Mono', monospace" font-size="14.5px" font-weight="bold" letter-spacing="-0.70" text-anchor="start" xml:space="preserve" >5V</text>
<ellipse cx="117" cy="531.5" rx="7" ry="7.5" fill="#00ffff" shape-rendering="geometricPrecision"/>
<text x="117" y="537.5" fill="#000" font-family="'Liberation Sans', sans-serif" font-weight="bold" font-size="16px" text-anchor="middle" textLength="7.5" lengthAdjust="spacingAndGlyphs">2</text>
<rect x="137" y="528" width="14" height="2" fill="#00ffff" />
<rect x="137" y="531" width="4" height="2" fill="#00ffff" />
<rect x="142" y="531" width="4" height="2" fill="#00ffff" />
<rect x="147" y="531" width="4" height="2" fill="#00ffff" />
<text transform="translate(172.5 534.6) scale(1 1.04)" fill="#00ffff" font-family="'Liberation Mono', monospace" font-size="14.5px" font-weight="bold" letter-spacing="-0.70" text-anchor="start" xml:space="preserve" >5V</text>
<ellipse cx="224" cy="531.5" rx="7" ry="7.5" fill="#444444" shape-rendering="geometricPrecision"/>
<text x="224" y="537.5" fill="#000" font-family="'Liberation Sans', sans-serif" font-weight="bold" font-size="16px" text-anchor="middle" textLength="7.5" lengthAdjust="spacingAndGlyphs">3</text>
<rect x="244" y="528" width="14" height="2" fill="#444444" />
<rect x="244" y="531" width="4" height="2" fill="#444444" />
<rect x="249" y="531" width="4" height="2" fill="#444444" />
<rect x="254" y="531" width="4" height="2" fill="#444444" />
<text transform="translate(267.5 534.6) scale(1 1.04)" fill="#444444" font-family="'Liberation Mono', monospace" font-size="14.5px" font-weight="bold" letter-spacing="-0.70" text-anchor="start" xml:space="preserve" >200mV</text>
<ellipse cx="331" cy="531.5" rx="7" ry="7.5" fill="#444444" shape-rendering="geometricPrecision"/>
<text x="331" y="537.5" fill="#000" font-family="'Liberation Sans', sans-serif" font-weight="bold" font-size="16px" text-anchor="middle" textLength="7.5" lengthAdjust="spacingAndGlyphs">4</text>
<rect x="351" y="528" width="14" height="2" fill="#444444" />
<rect x="351" y="531" width="4" height="2" fill="#444444" />
<rect x="356" y="531" width="4" height="2" fill="#444444" />
<rect x="361" y="531" width="4" height="2" fill="#444444" />
<text transform="translate(386.5 534.6) scale(1 1.04)" fill="#444444" font-family="'Liberation Mono', monospace" font-size="14.5px" font-weight="bold" letter-spacing="-0.70" text-anchor="start" xml:space="preserve" >2V</text>
<rect x="425.5" y="521.5" width="168" height="19" rx="4" ry="4" fill="#000" stroke="#fff" stroke-width="1" shape-rendering="geometricPrecision"/>
<text transform="translate(449 534.6) scale(1 1.04)" fill="#fff" font-family="'Liberation Mono', monospace" font-size="14.5px" font-weight="bold" letter-spacing="-0.70" text-anchor="start" xml:space="preserve" >200us</text>
<rect x="499" y="524" width="14" height="14" rx="3" fill="#fff" shape-rendering="geometricPrecision"/>
<text transform="translate(506 536.7) scale(1.17 1)" fill="#000" font-family="'Liberation Sans', sans-serif" font-weight="bold" font-size="15px" text-anchor="middle">H</text>
<text transform="translate(531 534.6) scale(1 1.04)" fill="#fff" font-family="'Liberation Mono', monospace" font-size="14.5px" font-weight="bold" letter-spacing="-0.70" text-anchor="start" xml:space="preserve" >0.000s</text>
<rect x="599.5" y="521.5" width="175" height="38" rx="4" ry="4" fill="#000" stroke="#fff" stroke-width="1" shape-rendering="geometricPrecision"/>
<ellipse cx="629" cy="531.5" rx="7" ry="7.5" fill="#ffcc00" shape-rendering="geometricPrecision"/>
<text x="629" y="537.5" fill="#000" font-family="'Liberation Sans', sans-serif" font-weight="bold" font-size="16px" text-anchor="middle" textLength="7.5" lengthAdjust="spacingAndGlyphs">1</text>
<path d="M654 537.5H658.5V525.5H663M655 532.3L658.5 528.2L662 532.3" fill="none" stroke="#ffcc00" stroke-width="1.2" shape-rendering="geometricPrecision"/>
<text transform="translate(681 534.6) scale(1 1.04)" fill="#ffcc00" font-family="'Liberation Mono', monospace" font-size="14.5px" font-weight="bold" letter-spacing="-0.70" text-anchor="start" xml:space="preserve" >10.8V</text>
<text transform="translate(755 534.6) scale(1 1.04)" fill="#ffcc00" font-family="'Liberation Mono', monospace" font-size="14.5px" font-weight="bold" letter-spacing="-0.70" text-anchor="start" xml:space="preserve" >DC</text>
<rect x="643.5" y="498.5" width="129" height="19" rx="4" ry="4" fill="#000" stroke="#fff" stroke-width="1" shape-rendering="geometricPrecision"/>
<rect x="645" y="500" width="24" height="16" rx="8" fill="#fff" shape-rendering="geometricPrecision"/>
<text x="657" y="514" fill="#000" font-family="'Liberation Sans', sans-serif" font-weight="bold" font-size="16.5px" text-anchor="middle">F</text>
<text transform="translate(681 511.6) scale(1 1.04)" fill="#fff" font-family="'Liberation Mono', monospace" font-size="14.5px" font-weight="bold" letter-spacing="-0.70" text-anchor="start" xml:space="preserve" >1.00000kHz</text>
<rect x="17.0" y="543.0" width="108" height="56" rx="3.5" ry="3.5" fill="#3399cc" stroke="#000078" stroke-width="2" shape-rendering="geometricPrecision"/>
<rect x="18.5" y="544.5" width="105" height="53" rx="2.5" ry="2.5" fill="#3399cc" stroke="#c4f4ff" stroke-width="1" shape-rendering="geometricPrecision"/>
<text x="32.5" y="565.7" fill="#231815" stroke="#231815" stroke-width="0.25" font-family="'Liberation Sans', sans-serif" font-size="17px" xml:space="preserve">H <tspan x="52.8" letter-spacing="0.4">Cursor</tspan></text>
<rect x="58" y="573" width="26" height="19.5" rx="4" fill="#ccffff" shape-rendering="geometricPrecision"/>
<rect x="64" y="573" width="2" height="19" fill="#231815" />
<rect x="76" y="573" width="2" height="19" fill="#231815" />
<rect x="129.0" y="543.0" width="108" height="56" rx="3.5" ry="3.5" fill="#33ffff" stroke="#000078" stroke-width="2" shape-rendering="geometricPrecision"/>
<text x="145.6" y="565.7" fill="#231815" stroke="#231815" stroke-width="0.25" font-family="'Liberation Sans', sans-serif" font-size="17px" xml:space="preserve">V <tspan x="165.0" letter-spacing="0.4">Cursor</tspan></text>
<rect x="169" y="573" width="29" height="20" rx="4" fill="#ccffff" shape-rendering="geometricPrecision"/>
<rect x="174" y="576" width="3" height="2" fill="#231815" />
<rect x="178" y="576" width="3" height="2" fill="#231815" />
<rect x="182" y="576" width="3" height="2" fill="#231815" />
<rect x="186" y="576" width="3" height="2" fill="#231815" />
<rect x="190" y="576" width="3" height="2" fill="#231815" />
<rect x="174" y="588" width="19" height="2" fill="#231815" />
</svg>
</body>
</html>
